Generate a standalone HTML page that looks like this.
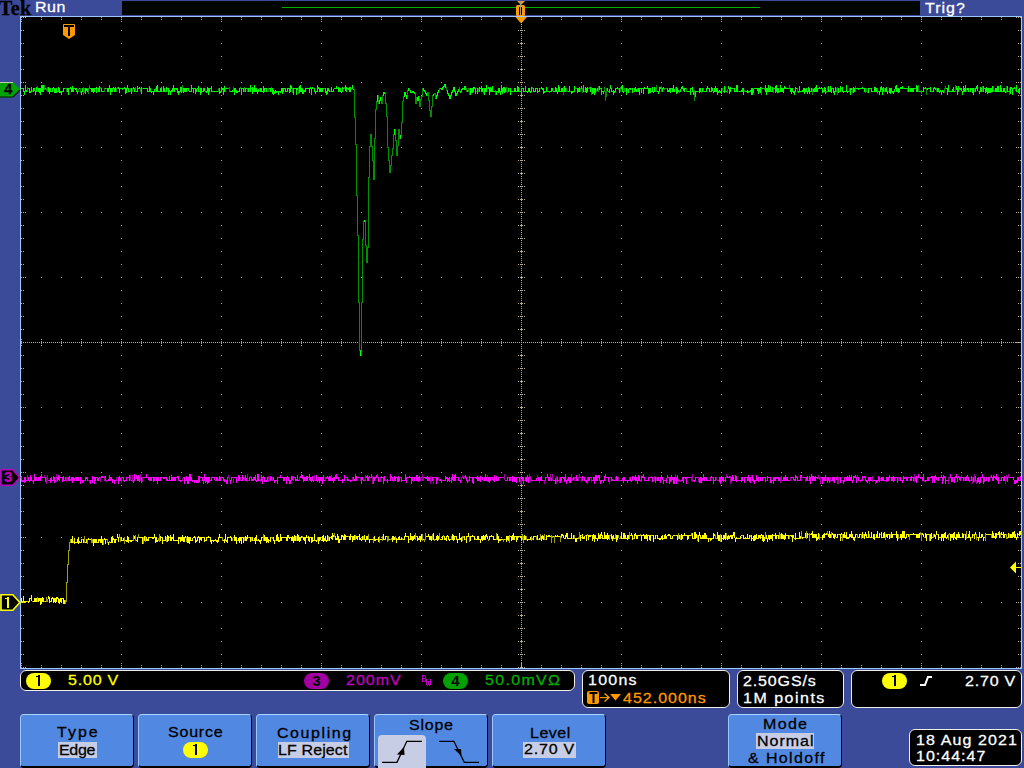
<!DOCTYPE html>
<html><head><meta charset="utf-8">
<style>
html,body{margin:0;padding:0;}
body{width:1024px;height:768px;overflow:hidden;background:#3b4a99;position:relative;font-family:"Liberation Sans",sans-serif;}
.a{position:absolute;}
.t{position:absolute;white-space:nowrap;line-height:1;}
#hdr{left:122px;top:1px;width:798px;height:14px;background:#000500;}
#grat{left:20px;top:16px;width:1000px;height:651px;border:1px solid #9cc8ff;background:#000;}
.rb{position:absolute;background:#000;border:1px solid #f0eee8;border-radius:6px;box-sizing:border-box;}
.btn{position:absolute;top:714px;width:114px;height:54px;box-sizing:border-box;background:#5188e1;border-radius:4px 4px 4px 4px;border-top:1px solid #a8d4ff;border-left:1px solid #96c8ff;border-right:1px solid #000;border-bottom:2px solid #000;}
.bl{position:absolute;left:0;width:100%;text-align:center;color:#000;font-size:16px;line-height:1;white-space:nowrap;}
.hl{background:#c8cde6;padding:1px 1px;}
.pill{position:absolute;border-radius:8px;text-align:center;color:#000;font-size:15px;font-weight:bold;line-height:16px;}
</style></head><body>
<div class="t" style="left:-1px;top:-2px;font-family:'Liberation Serif',serif;font-weight:bold;font-size:20px;color:#000;letter-spacing:0.3px;-webkit-text-stroke:0.3px #000;">Tek</div>
<div class="a" id="hdr"></div>
<div class="a" id="grat"></div>
<svg class="a" style="left:0;top:0" width="1024" height="768" shape-rendering="crispEdges">
<rect x="282" y="7" width="478" height="1" fill="#00b000"/>
<path d="M21 17h1v1h-1zM21 19h1v1h-1zM21 21h1v1h-1zM21 30h1v1h-1zM21 43h1v1h-1zM21 56h1v1h-1zM21 69h1v1h-1zM21 82h1v1h-1zM21 95h1v1h-1zM21 108h1v1h-1zM21 121h1v1h-1zM21 134h1v1h-1zM21 147h1v1h-1zM21 160h1v1h-1zM21 173h1v1h-1zM21 186h1v1h-1zM21 199h1v1h-1zM21 212h1v1h-1zM21 225h1v1h-1zM21 238h1v1h-1zM21 251h1v1h-1zM21 264h1v1h-1zM21 277h1v1h-1zM21 290h1v1h-1zM21 303h1v1h-1zM21 316h1v1h-1zM21 329h1v1h-1zM21 339h1v1h-1zM21 341h1v1h-1zM21 342h1v1h-1zM21 343h1v1h-1zM21 345h1v1h-1zM21 355h1v1h-1zM21 368h1v1h-1zM21 381h1v1h-1zM21 394h1v1h-1zM21 407h1v1h-1zM21 420h1v1h-1zM21 433h1v1h-1zM21 446h1v1h-1zM21 459h1v1h-1zM21 472h1v1h-1zM21 485h1v1h-1zM21 498h1v1h-1zM21 511h1v1h-1zM21 524h1v1h-1zM21 537h1v1h-1zM21 550h1v1h-1zM21 563h1v1h-1zM21 576h1v1h-1zM21 589h1v1h-1zM21 602h1v1h-1zM21 615h1v1h-1zM21 628h1v1h-1zM21 641h1v1h-1zM21 654h1v1h-1zM21 663h1v1h-1zM21 665h1v1h-1zM21 667h1v1h-1zM23 17h1v1h-1zM23 30h1v1h-1zM23 43h1v1h-1zM23 56h1v1h-1zM23 69h1v1h-1zM23 82h1v1h-1zM23 95h1v1h-1zM23 108h1v1h-1zM23 121h1v1h-1zM23 134h1v1h-1zM23 147h1v1h-1zM23 160h1v1h-1zM23 173h1v1h-1zM23 186h1v1h-1zM23 199h1v1h-1zM23 212h1v1h-1zM23 225h1v1h-1zM23 238h1v1h-1zM23 251h1v1h-1zM23 264h1v1h-1zM23 277h1v1h-1zM23 290h1v1h-1zM23 303h1v1h-1zM23 316h1v1h-1zM23 329h1v1h-1zM23 342h1v1h-1zM23 355h1v1h-1zM23 368h1v1h-1zM23 381h1v1h-1zM23 394h1v1h-1zM23 407h1v1h-1zM23 420h1v1h-1zM23 433h1v1h-1zM23 446h1v1h-1zM23 459h1v1h-1zM23 472h1v1h-1zM23 485h1v1h-1zM23 498h1v1h-1zM23 511h1v1h-1zM23 524h1v1h-1zM23 537h1v1h-1zM23 550h1v1h-1zM23 563h1v1h-1zM23 576h1v1h-1zM23 589h1v1h-1zM23 602h1v1h-1zM23 615h1v1h-1zM23 628h1v1h-1zM23 641h1v1h-1zM23 654h1v1h-1zM23 667h1v1h-1zM25 17h1v1h-1zM25 82h1v1h-1zM25 147h1v1h-1zM25 212h1v1h-1zM25 277h1v1h-1zM25 342h1v1h-1zM25 407h1v1h-1zM25 472h1v1h-1zM25 537h1v1h-1zM25 602h1v1h-1zM25 667h1v1h-1zM27 342h1v1h-1zM29 342h1v1h-1zM31 342h1v1h-1zM33 342h1v1h-1zM35 342h1v1h-1zM37 342h1v1h-1zM39 342h1v1h-1zM41 17h1v1h-1zM41 19h1v1h-1zM41 82h1v1h-1zM41 147h1v1h-1zM41 212h1v1h-1zM41 277h1v1h-1zM41 339h1v1h-1zM41 341h1v1h-1zM41 342h1v1h-1zM41 343h1v1h-1zM41 345h1v1h-1zM41 407h1v1h-1zM41 472h1v1h-1zM41 537h1v1h-1zM41 602h1v1h-1zM41 665h1v1h-1zM41 667h1v1h-1zM43 342h1v1h-1zM45 342h1v1h-1zM47 342h1v1h-1zM49 342h1v1h-1zM51 342h1v1h-1zM53 342h1v1h-1zM55 342h1v1h-1zM57 342h1v1h-1zM59 342h1v1h-1zM61 17h1v1h-1zM61 19h1v1h-1zM61 82h1v1h-1zM61 147h1v1h-1zM61 212h1v1h-1zM61 277h1v1h-1zM61 339h1v1h-1zM61 341h1v1h-1zM61 342h1v1h-1zM61 343h1v1h-1zM61 345h1v1h-1zM61 407h1v1h-1zM61 472h1v1h-1zM61 537h1v1h-1zM61 602h1v1h-1zM61 665h1v1h-1zM61 667h1v1h-1zM63 342h1v1h-1zM65 342h1v1h-1zM67 342h1v1h-1zM69 342h1v1h-1zM71 342h1v1h-1zM73 342h1v1h-1zM75 342h1v1h-1zM77 342h1v1h-1zM79 342h1v1h-1zM81 17h1v1h-1zM81 19h1v1h-1zM81 82h1v1h-1zM81 147h1v1h-1zM81 212h1v1h-1zM81 277h1v1h-1zM81 339h1v1h-1zM81 341h1v1h-1zM81 342h1v1h-1zM81 343h1v1h-1zM81 345h1v1h-1zM81 407h1v1h-1zM81 472h1v1h-1zM81 537h1v1h-1zM81 602h1v1h-1zM81 665h1v1h-1zM81 667h1v1h-1zM83 342h1v1h-1zM85 342h1v1h-1zM87 342h1v1h-1zM89 342h1v1h-1zM91 342h1v1h-1zM93 342h1v1h-1zM95 342h1v1h-1zM97 342h1v1h-1zM99 342h1v1h-1zM101 17h1v1h-1zM101 19h1v1h-1zM101 82h1v1h-1zM101 147h1v1h-1zM101 212h1v1h-1zM101 277h1v1h-1zM101 339h1v1h-1zM101 341h1v1h-1zM101 342h1v1h-1zM101 343h1v1h-1zM101 345h1v1h-1zM101 407h1v1h-1zM101 472h1v1h-1zM101 537h1v1h-1zM101 602h1v1h-1zM101 665h1v1h-1zM101 667h1v1h-1zM103 342h1v1h-1zM105 342h1v1h-1zM107 342h1v1h-1zM109 342h1v1h-1zM111 342h1v1h-1zM113 342h1v1h-1zM115 342h1v1h-1zM117 342h1v1h-1zM119 342h1v1h-1zM121 17h1v1h-1zM121 19h1v1h-1zM121 21h1v1h-1zM121 30h1v1h-1zM121 43h1v1h-1zM121 56h1v1h-1zM121 69h1v1h-1zM121 82h1v1h-1zM121 95h1v1h-1zM121 108h1v1h-1zM121 121h1v1h-1zM121 134h1v1h-1zM121 147h1v1h-1zM121 160h1v1h-1zM121 173h1v1h-1zM121 186h1v1h-1zM121 199h1v1h-1zM121 212h1v1h-1zM121 225h1v1h-1zM121 238h1v1h-1zM121 251h1v1h-1zM121 264h1v1h-1zM121 277h1v1h-1zM121 290h1v1h-1zM121 303h1v1h-1zM121 316h1v1h-1zM121 329h1v1h-1zM121 339h1v1h-1zM121 341h1v1h-1zM121 342h1v1h-1zM121 343h1v1h-1zM121 345h1v1h-1zM121 355h1v1h-1zM121 368h1v1h-1zM121 381h1v1h-1zM121 394h1v1h-1zM121 407h1v1h-1zM121 420h1v1h-1zM121 433h1v1h-1zM121 446h1v1h-1zM121 459h1v1h-1zM121 472h1v1h-1zM121 485h1v1h-1zM121 498h1v1h-1zM121 511h1v1h-1zM121 524h1v1h-1zM121 537h1v1h-1zM121 550h1v1h-1zM121 563h1v1h-1zM121 576h1v1h-1zM121 589h1v1h-1zM121 602h1v1h-1zM121 615h1v1h-1zM121 628h1v1h-1zM121 641h1v1h-1zM121 654h1v1h-1zM121 663h1v1h-1zM121 665h1v1h-1zM121 667h1v1h-1zM123 342h1v1h-1zM125 342h1v1h-1zM127 342h1v1h-1zM129 342h1v1h-1zM131 342h1v1h-1zM133 342h1v1h-1zM135 342h1v1h-1zM137 342h1v1h-1zM139 342h1v1h-1zM141 17h1v1h-1zM141 19h1v1h-1zM141 82h1v1h-1zM141 147h1v1h-1zM141 212h1v1h-1zM141 277h1v1h-1zM141 339h1v1h-1zM141 341h1v1h-1zM141 342h1v1h-1zM141 343h1v1h-1zM141 345h1v1h-1zM141 407h1v1h-1zM141 472h1v1h-1zM141 537h1v1h-1zM141 602h1v1h-1zM141 665h1v1h-1zM141 667h1v1h-1zM143 342h1v1h-1zM145 342h1v1h-1zM147 342h1v1h-1zM149 342h1v1h-1zM151 342h1v1h-1zM153 342h1v1h-1zM155 342h1v1h-1zM157 342h1v1h-1zM159 342h1v1h-1zM161 17h1v1h-1zM161 19h1v1h-1zM161 82h1v1h-1zM161 147h1v1h-1zM161 212h1v1h-1zM161 277h1v1h-1zM161 339h1v1h-1zM161 341h1v1h-1zM161 342h1v1h-1zM161 343h1v1h-1zM161 345h1v1h-1zM161 407h1v1h-1zM161 472h1v1h-1zM161 537h1v1h-1zM161 602h1v1h-1zM161 665h1v1h-1zM161 667h1v1h-1zM163 342h1v1h-1zM165 342h1v1h-1zM167 342h1v1h-1zM169 342h1v1h-1zM171 342h1v1h-1zM173 342h1v1h-1zM175 342h1v1h-1zM177 342h1v1h-1zM179 342h1v1h-1zM181 17h1v1h-1zM181 19h1v1h-1zM181 82h1v1h-1zM181 147h1v1h-1zM181 212h1v1h-1zM181 277h1v1h-1zM181 339h1v1h-1zM181 341h1v1h-1zM181 342h1v1h-1zM181 343h1v1h-1zM181 345h1v1h-1zM181 407h1v1h-1zM181 472h1v1h-1zM181 537h1v1h-1zM181 602h1v1h-1zM181 665h1v1h-1zM181 667h1v1h-1zM183 342h1v1h-1zM185 342h1v1h-1zM187 342h1v1h-1zM189 342h1v1h-1zM191 342h1v1h-1zM193 342h1v1h-1zM195 342h1v1h-1zM197 342h1v1h-1zM199 342h1v1h-1zM201 17h1v1h-1zM201 19h1v1h-1zM201 82h1v1h-1zM201 147h1v1h-1zM201 212h1v1h-1zM201 277h1v1h-1zM201 339h1v1h-1zM201 341h1v1h-1zM201 342h1v1h-1zM201 343h1v1h-1zM201 345h1v1h-1zM201 407h1v1h-1zM201 472h1v1h-1zM201 537h1v1h-1zM201 602h1v1h-1zM201 665h1v1h-1zM201 667h1v1h-1zM203 342h1v1h-1zM205 342h1v1h-1zM207 342h1v1h-1zM209 342h1v1h-1zM211 342h1v1h-1zM213 342h1v1h-1zM215 342h1v1h-1zM217 342h1v1h-1zM219 342h1v1h-1zM221 17h1v1h-1zM221 19h1v1h-1zM221 21h1v1h-1zM221 30h1v1h-1zM221 43h1v1h-1zM221 56h1v1h-1zM221 69h1v1h-1zM221 82h1v1h-1zM221 95h1v1h-1zM221 108h1v1h-1zM221 121h1v1h-1zM221 134h1v1h-1zM221 147h1v1h-1zM221 160h1v1h-1zM221 173h1v1h-1zM221 186h1v1h-1zM221 199h1v1h-1zM221 212h1v1h-1zM221 225h1v1h-1zM221 238h1v1h-1zM221 251h1v1h-1zM221 264h1v1h-1zM221 277h1v1h-1zM221 290h1v1h-1zM221 303h1v1h-1zM221 316h1v1h-1zM221 329h1v1h-1zM221 339h1v1h-1zM221 341h1v1h-1zM221 342h1v1h-1zM221 343h1v1h-1zM221 345h1v1h-1zM221 355h1v1h-1zM221 368h1v1h-1zM221 381h1v1h-1zM221 394h1v1h-1zM221 407h1v1h-1zM221 420h1v1h-1zM221 433h1v1h-1zM221 446h1v1h-1zM221 459h1v1h-1zM221 472h1v1h-1zM221 485h1v1h-1zM221 498h1v1h-1zM221 511h1v1h-1zM221 524h1v1h-1zM221 537h1v1h-1zM221 550h1v1h-1zM221 563h1v1h-1zM221 576h1v1h-1zM221 589h1v1h-1zM221 602h1v1h-1zM221 615h1v1h-1zM221 628h1v1h-1zM221 641h1v1h-1zM221 654h1v1h-1zM221 663h1v1h-1zM221 665h1v1h-1zM221 667h1v1h-1zM223 342h1v1h-1zM225 342h1v1h-1zM227 342h1v1h-1zM229 342h1v1h-1zM231 342h1v1h-1zM233 342h1v1h-1zM235 342h1v1h-1zM237 342h1v1h-1zM239 342h1v1h-1zM241 17h1v1h-1zM241 19h1v1h-1zM241 82h1v1h-1zM241 147h1v1h-1zM241 212h1v1h-1zM241 277h1v1h-1zM241 339h1v1h-1zM241 341h1v1h-1zM241 342h1v1h-1zM241 343h1v1h-1zM241 345h1v1h-1zM241 407h1v1h-1zM241 472h1v1h-1zM241 537h1v1h-1zM241 602h1v1h-1zM241 665h1v1h-1zM241 667h1v1h-1zM243 342h1v1h-1zM245 342h1v1h-1zM247 342h1v1h-1zM249 342h1v1h-1zM251 342h1v1h-1zM253 342h1v1h-1zM255 342h1v1h-1zM257 342h1v1h-1zM259 342h1v1h-1zM261 17h1v1h-1zM261 19h1v1h-1zM261 82h1v1h-1zM261 147h1v1h-1zM261 212h1v1h-1zM261 277h1v1h-1zM261 339h1v1h-1zM261 341h1v1h-1zM261 342h1v1h-1zM261 343h1v1h-1zM261 345h1v1h-1zM261 407h1v1h-1zM261 472h1v1h-1zM261 537h1v1h-1zM261 602h1v1h-1zM261 665h1v1h-1zM261 667h1v1h-1zM263 342h1v1h-1zM265 342h1v1h-1zM267 342h1v1h-1zM269 342h1v1h-1zM271 342h1v1h-1zM273 342h1v1h-1zM275 342h1v1h-1zM277 342h1v1h-1zM279 342h1v1h-1zM281 17h1v1h-1zM281 19h1v1h-1zM281 82h1v1h-1zM281 147h1v1h-1zM281 212h1v1h-1zM281 277h1v1h-1zM281 339h1v1h-1zM281 341h1v1h-1zM281 342h1v1h-1zM281 343h1v1h-1zM281 345h1v1h-1zM281 407h1v1h-1zM281 472h1v1h-1zM281 537h1v1h-1zM281 602h1v1h-1zM281 665h1v1h-1zM281 667h1v1h-1zM283 342h1v1h-1zM285 342h1v1h-1zM287 342h1v1h-1zM289 342h1v1h-1zM291 342h1v1h-1zM293 342h1v1h-1zM295 342h1v1h-1zM297 342h1v1h-1zM299 342h1v1h-1zM301 17h1v1h-1zM301 19h1v1h-1zM301 82h1v1h-1zM301 147h1v1h-1zM301 212h1v1h-1zM301 277h1v1h-1zM301 339h1v1h-1zM301 341h1v1h-1zM301 342h1v1h-1zM301 343h1v1h-1zM301 345h1v1h-1zM301 407h1v1h-1zM301 472h1v1h-1zM301 537h1v1h-1zM301 602h1v1h-1zM301 665h1v1h-1zM301 667h1v1h-1zM303 342h1v1h-1zM305 342h1v1h-1zM307 342h1v1h-1zM309 342h1v1h-1zM311 342h1v1h-1zM313 342h1v1h-1zM315 342h1v1h-1zM317 342h1v1h-1zM319 342h1v1h-1zM321 17h1v1h-1zM321 19h1v1h-1zM321 21h1v1h-1zM321 30h1v1h-1zM321 43h1v1h-1zM321 56h1v1h-1zM321 69h1v1h-1zM321 82h1v1h-1zM321 95h1v1h-1zM321 108h1v1h-1zM321 121h1v1h-1zM321 134h1v1h-1zM321 147h1v1h-1zM321 160h1v1h-1zM321 173h1v1h-1zM321 186h1v1h-1zM321 199h1v1h-1zM321 212h1v1h-1zM321 225h1v1h-1zM321 238h1v1h-1zM321 251h1v1h-1zM321 264h1v1h-1zM321 277h1v1h-1zM321 290h1v1h-1zM321 303h1v1h-1zM321 316h1v1h-1zM321 329h1v1h-1zM321 339h1v1h-1zM321 341h1v1h-1zM321 342h1v1h-1zM321 343h1v1h-1zM321 345h1v1h-1zM321 355h1v1h-1zM321 368h1v1h-1zM321 381h1v1h-1zM321 394h1v1h-1zM321 407h1v1h-1zM321 420h1v1h-1zM321 433h1v1h-1zM321 446h1v1h-1zM321 459h1v1h-1zM321 472h1v1h-1zM321 485h1v1h-1zM321 498h1v1h-1zM321 511h1v1h-1zM321 524h1v1h-1zM321 537h1v1h-1zM321 550h1v1h-1zM321 563h1v1h-1zM321 576h1v1h-1zM321 589h1v1h-1zM321 602h1v1h-1zM321 615h1v1h-1zM321 628h1v1h-1zM321 641h1v1h-1zM321 654h1v1h-1zM321 663h1v1h-1zM321 665h1v1h-1zM321 667h1v1h-1zM323 342h1v1h-1zM325 342h1v1h-1zM327 342h1v1h-1zM329 342h1v1h-1zM331 342h1v1h-1zM333 342h1v1h-1zM335 342h1v1h-1zM337 342h1v1h-1zM339 342h1v1h-1zM341 17h1v1h-1zM341 19h1v1h-1zM341 82h1v1h-1zM341 147h1v1h-1zM341 212h1v1h-1zM341 277h1v1h-1zM341 339h1v1h-1zM341 341h1v1h-1zM341 342h1v1h-1zM341 343h1v1h-1zM341 345h1v1h-1zM341 407h1v1h-1zM341 472h1v1h-1zM341 537h1v1h-1zM341 602h1v1h-1zM341 665h1v1h-1zM341 667h1v1h-1zM343 342h1v1h-1zM345 342h1v1h-1zM347 342h1v1h-1zM349 342h1v1h-1zM351 342h1v1h-1zM353 342h1v1h-1zM355 342h1v1h-1zM357 342h1v1h-1zM359 342h1v1h-1zM361 17h1v1h-1zM361 19h1v1h-1zM361 82h1v1h-1zM361 147h1v1h-1zM361 212h1v1h-1zM361 277h1v1h-1zM361 339h1v1h-1zM361 341h1v1h-1zM361 342h1v1h-1zM361 343h1v1h-1zM361 345h1v1h-1zM361 407h1v1h-1zM361 472h1v1h-1zM361 537h1v1h-1zM361 602h1v1h-1zM361 665h1v1h-1zM361 667h1v1h-1zM363 342h1v1h-1zM365 342h1v1h-1zM367 342h1v1h-1zM369 342h1v1h-1zM371 342h1v1h-1zM373 342h1v1h-1zM375 342h1v1h-1zM377 342h1v1h-1zM379 342h1v1h-1zM381 17h1v1h-1zM381 19h1v1h-1zM381 82h1v1h-1zM381 147h1v1h-1zM381 212h1v1h-1zM381 277h1v1h-1zM381 339h1v1h-1zM381 341h1v1h-1zM381 342h1v1h-1zM381 343h1v1h-1zM381 345h1v1h-1zM381 407h1v1h-1zM381 472h1v1h-1zM381 537h1v1h-1zM381 602h1v1h-1zM381 665h1v1h-1zM381 667h1v1h-1zM383 342h1v1h-1zM385 342h1v1h-1zM387 342h1v1h-1zM389 342h1v1h-1zM391 342h1v1h-1zM393 342h1v1h-1zM395 342h1v1h-1zM397 342h1v1h-1zM399 342h1v1h-1zM401 17h1v1h-1zM401 19h1v1h-1zM401 82h1v1h-1zM401 147h1v1h-1zM401 212h1v1h-1zM401 277h1v1h-1zM401 339h1v1h-1zM401 341h1v1h-1zM401 342h1v1h-1zM401 343h1v1h-1zM401 345h1v1h-1zM401 407h1v1h-1zM401 472h1v1h-1zM401 537h1v1h-1zM401 602h1v1h-1zM401 665h1v1h-1zM401 667h1v1h-1zM403 342h1v1h-1zM405 342h1v1h-1zM407 342h1v1h-1zM409 342h1v1h-1zM411 342h1v1h-1zM413 342h1v1h-1zM415 342h1v1h-1zM417 342h1v1h-1zM419 342h1v1h-1zM421 17h1v1h-1zM421 19h1v1h-1zM421 21h1v1h-1zM421 30h1v1h-1zM421 43h1v1h-1zM421 56h1v1h-1zM421 69h1v1h-1zM421 82h1v1h-1zM421 95h1v1h-1zM421 108h1v1h-1zM421 121h1v1h-1zM421 134h1v1h-1zM421 147h1v1h-1zM421 160h1v1h-1zM421 173h1v1h-1zM421 186h1v1h-1zM421 199h1v1h-1zM421 212h1v1h-1zM421 225h1v1h-1zM421 238h1v1h-1zM421 251h1v1h-1zM421 264h1v1h-1zM421 277h1v1h-1zM421 290h1v1h-1zM421 303h1v1h-1zM421 316h1v1h-1zM421 329h1v1h-1zM421 339h1v1h-1zM421 341h1v1h-1zM421 342h1v1h-1zM421 343h1v1h-1zM421 345h1v1h-1zM421 355h1v1h-1zM421 368h1v1h-1zM421 381h1v1h-1zM421 394h1v1h-1zM421 407h1v1h-1zM421 420h1v1h-1zM421 433h1v1h-1zM421 446h1v1h-1zM421 459h1v1h-1zM421 472h1v1h-1zM421 485h1v1h-1zM421 498h1v1h-1zM421 511h1v1h-1zM421 524h1v1h-1zM421 537h1v1h-1zM421 550h1v1h-1zM421 563h1v1h-1zM421 576h1v1h-1zM421 589h1v1h-1zM421 602h1v1h-1zM421 615h1v1h-1zM421 628h1v1h-1zM421 641h1v1h-1zM421 654h1v1h-1zM421 663h1v1h-1zM421 665h1v1h-1zM421 667h1v1h-1zM423 342h1v1h-1zM425 342h1v1h-1zM427 342h1v1h-1zM429 342h1v1h-1zM431 342h1v1h-1zM433 342h1v1h-1zM435 342h1v1h-1zM437 342h1v1h-1zM439 342h1v1h-1zM441 17h1v1h-1zM441 19h1v1h-1zM441 82h1v1h-1zM441 147h1v1h-1zM441 212h1v1h-1zM441 277h1v1h-1zM441 339h1v1h-1zM441 341h1v1h-1zM441 342h1v1h-1zM441 343h1v1h-1zM441 345h1v1h-1zM441 407h1v1h-1zM441 472h1v1h-1zM441 537h1v1h-1zM441 602h1v1h-1zM441 665h1v1h-1zM441 667h1v1h-1zM443 342h1v1h-1zM445 342h1v1h-1zM447 342h1v1h-1zM449 342h1v1h-1zM451 342h1v1h-1zM453 342h1v1h-1zM455 342h1v1h-1zM457 342h1v1h-1zM459 342h1v1h-1zM461 17h1v1h-1zM461 19h1v1h-1zM461 82h1v1h-1zM461 147h1v1h-1zM461 212h1v1h-1zM461 277h1v1h-1zM461 339h1v1h-1zM461 341h1v1h-1zM461 342h1v1h-1zM461 343h1v1h-1zM461 345h1v1h-1zM461 407h1v1h-1zM461 472h1v1h-1zM461 537h1v1h-1zM461 602h1v1h-1zM461 665h1v1h-1zM461 667h1v1h-1zM463 342h1v1h-1zM465 342h1v1h-1zM467 342h1v1h-1zM469 342h1v1h-1zM471 342h1v1h-1zM473 342h1v1h-1zM475 342h1v1h-1zM477 342h1v1h-1zM479 342h1v1h-1zM481 17h1v1h-1zM481 19h1v1h-1zM481 82h1v1h-1zM481 147h1v1h-1zM481 212h1v1h-1zM481 277h1v1h-1zM481 339h1v1h-1zM481 341h1v1h-1zM481 342h1v1h-1zM481 343h1v1h-1zM481 345h1v1h-1zM481 407h1v1h-1zM481 472h1v1h-1zM481 537h1v1h-1zM481 602h1v1h-1zM481 665h1v1h-1zM481 667h1v1h-1zM483 342h1v1h-1zM485 342h1v1h-1zM487 342h1v1h-1zM489 342h1v1h-1zM491 342h1v1h-1zM493 342h1v1h-1zM495 342h1v1h-1zM497 342h1v1h-1zM499 342h1v1h-1zM501 17h1v1h-1zM501 19h1v1h-1zM501 82h1v1h-1zM501 147h1v1h-1zM501 212h1v1h-1zM501 277h1v1h-1zM501 339h1v1h-1zM501 341h1v1h-1zM501 342h1v1h-1zM501 343h1v1h-1zM501 345h1v1h-1zM501 407h1v1h-1zM501 472h1v1h-1zM501 537h1v1h-1zM501 602h1v1h-1zM501 665h1v1h-1zM501 667h1v1h-1zM503 342h1v1h-1zM505 342h1v1h-1zM507 342h1v1h-1zM509 342h1v1h-1zM511 342h1v1h-1zM513 342h1v1h-1zM515 342h1v1h-1zM517 342h1v1h-1zM518 17h1v1h-1zM518 30h1v1h-1zM518 43h1v1h-1zM518 56h1v1h-1zM518 69h1v1h-1zM518 82h1v1h-1zM518 95h1v1h-1zM518 108h1v1h-1zM518 121h1v1h-1zM518 134h1v1h-1zM518 147h1v1h-1zM518 160h1v1h-1zM518 173h1v1h-1zM518 186h1v1h-1zM518 199h1v1h-1zM518 212h1v1h-1zM518 225h1v1h-1zM518 238h1v1h-1zM518 251h1v1h-1zM518 264h1v1h-1zM518 277h1v1h-1zM518 290h1v1h-1zM518 303h1v1h-1zM518 316h1v1h-1zM518 329h1v1h-1zM518 355h1v1h-1zM518 368h1v1h-1zM518 381h1v1h-1zM518 394h1v1h-1zM518 407h1v1h-1zM518 420h1v1h-1zM518 433h1v1h-1zM518 446h1v1h-1zM518 459h1v1h-1zM518 472h1v1h-1zM518 485h1v1h-1zM518 498h1v1h-1zM518 511h1v1h-1zM518 524h1v1h-1zM518 537h1v1h-1zM518 550h1v1h-1zM518 563h1v1h-1zM518 576h1v1h-1zM518 589h1v1h-1zM518 602h1v1h-1zM518 615h1v1h-1zM518 628h1v1h-1zM518 641h1v1h-1zM518 654h1v1h-1zM518 667h1v1h-1zM519 342h1v1h-1zM520 17h1v1h-1zM520 30h1v1h-1zM520 43h1v1h-1zM520 56h1v1h-1zM520 69h1v1h-1zM520 82h1v1h-1zM520 95h1v1h-1zM520 108h1v1h-1zM520 121h1v1h-1zM520 134h1v1h-1zM520 147h1v1h-1zM520 160h1v1h-1zM520 173h1v1h-1zM520 186h1v1h-1zM520 199h1v1h-1zM520 212h1v1h-1zM520 225h1v1h-1zM520 238h1v1h-1zM520 251h1v1h-1zM520 264h1v1h-1zM520 277h1v1h-1zM520 290h1v1h-1zM520 303h1v1h-1zM520 316h1v1h-1zM520 329h1v1h-1zM520 355h1v1h-1zM520 368h1v1h-1zM520 381h1v1h-1zM520 394h1v1h-1zM520 407h1v1h-1zM520 420h1v1h-1zM520 433h1v1h-1zM520 446h1v1h-1zM520 459h1v1h-1zM520 472h1v1h-1zM520 485h1v1h-1zM520 498h1v1h-1zM520 511h1v1h-1zM520 524h1v1h-1zM520 537h1v1h-1zM520 550h1v1h-1zM520 563h1v1h-1zM520 576h1v1h-1zM520 589h1v1h-1zM520 602h1v1h-1zM520 615h1v1h-1zM520 628h1v1h-1zM520 641h1v1h-1zM520 654h1v1h-1zM520 667h1v1h-1zM521 17h1v1h-1zM521 18h1v1h-1zM521 19h1v1h-1zM521 20h1v1h-1zM521 21h1v1h-1zM521 22h1v1h-1zM521 24h1v1h-1zM521 26h1v1h-1zM521 28h1v1h-1zM521 30h1v1h-1zM521 32h1v1h-1zM521 34h1v1h-1zM521 36h1v1h-1zM521 38h1v1h-1zM521 40h1v1h-1zM521 42h1v1h-1zM521 43h1v1h-1zM521 44h1v1h-1zM521 46h1v1h-1zM521 48h1v1h-1zM521 50h1v1h-1zM521 52h1v1h-1zM521 54h1v1h-1zM521 56h1v1h-1zM521 58h1v1h-1zM521 60h1v1h-1zM521 62h1v1h-1zM521 64h1v1h-1zM521 66h1v1h-1zM521 68h1v1h-1zM521 69h1v1h-1zM521 70h1v1h-1zM521 72h1v1h-1zM521 74h1v1h-1zM521 76h1v1h-1zM521 78h1v1h-1zM521 80h1v1h-1zM521 82h1v1h-1zM521 84h1v1h-1zM521 86h1v1h-1zM521 88h1v1h-1zM521 90h1v1h-1zM521 92h1v1h-1zM521 94h1v1h-1zM521 95h1v1h-1zM521 96h1v1h-1zM521 98h1v1h-1zM521 100h1v1h-1zM521 102h1v1h-1zM521 104h1v1h-1zM521 106h1v1h-1zM521 108h1v1h-1zM521 110h1v1h-1zM521 112h1v1h-1zM521 114h1v1h-1zM521 116h1v1h-1zM521 118h1v1h-1zM521 120h1v1h-1zM521 121h1v1h-1zM521 122h1v1h-1zM521 124h1v1h-1zM521 126h1v1h-1zM521 128h1v1h-1zM521 130h1v1h-1zM521 132h1v1h-1zM521 134h1v1h-1zM521 136h1v1h-1zM521 138h1v1h-1zM521 140h1v1h-1zM521 142h1v1h-1zM521 144h1v1h-1zM521 146h1v1h-1zM521 147h1v1h-1zM521 148h1v1h-1zM521 150h1v1h-1zM521 152h1v1h-1zM521 154h1v1h-1zM521 156h1v1h-1zM521 158h1v1h-1zM521 160h1v1h-1zM521 162h1v1h-1zM521 164h1v1h-1zM521 166h1v1h-1zM521 168h1v1h-1zM521 170h1v1h-1zM521 172h1v1h-1zM521 173h1v1h-1zM521 174h1v1h-1zM521 176h1v1h-1zM521 178h1v1h-1zM521 180h1v1h-1zM521 182h1v1h-1zM521 184h1v1h-1zM521 186h1v1h-1zM521 188h1v1h-1zM521 190h1v1h-1zM521 192h1v1h-1zM521 194h1v1h-1zM521 196h1v1h-1zM521 198h1v1h-1zM521 199h1v1h-1zM521 200h1v1h-1zM521 202h1v1h-1zM521 204h1v1h-1zM521 206h1v1h-1zM521 208h1v1h-1zM521 210h1v1h-1zM521 212h1v1h-1zM521 214h1v1h-1zM521 216h1v1h-1zM521 218h1v1h-1zM521 220h1v1h-1zM521 222h1v1h-1zM521 224h1v1h-1zM521 225h1v1h-1zM521 226h1v1h-1zM521 228h1v1h-1zM521 230h1v1h-1zM521 232h1v1h-1zM521 234h1v1h-1zM521 236h1v1h-1zM521 238h1v1h-1zM521 240h1v1h-1zM521 242h1v1h-1zM521 244h1v1h-1zM521 246h1v1h-1zM521 248h1v1h-1zM521 250h1v1h-1zM521 251h1v1h-1zM521 252h1v1h-1zM521 254h1v1h-1zM521 256h1v1h-1zM521 258h1v1h-1zM521 260h1v1h-1zM521 262h1v1h-1zM521 264h1v1h-1zM521 266h1v1h-1zM521 268h1v1h-1zM521 270h1v1h-1zM521 272h1v1h-1zM521 274h1v1h-1zM521 276h1v1h-1zM521 277h1v1h-1zM521 278h1v1h-1zM521 280h1v1h-1zM521 282h1v1h-1zM521 284h1v1h-1zM521 286h1v1h-1zM521 288h1v1h-1zM521 290h1v1h-1zM521 292h1v1h-1zM521 294h1v1h-1zM521 296h1v1h-1zM521 298h1v1h-1zM521 300h1v1h-1zM521 302h1v1h-1zM521 303h1v1h-1zM521 304h1v1h-1zM521 306h1v1h-1zM521 308h1v1h-1zM521 310h1v1h-1zM521 312h1v1h-1zM521 314h1v1h-1zM521 316h1v1h-1zM521 318h1v1h-1zM521 320h1v1h-1zM521 322h1v1h-1zM521 324h1v1h-1zM521 326h1v1h-1zM521 328h1v1h-1zM521 329h1v1h-1zM521 330h1v1h-1zM521 332h1v1h-1zM521 334h1v1h-1zM521 336h1v1h-1zM521 338h1v1h-1zM521 340h1v1h-1zM521 342h1v1h-1zM521 344h1v1h-1zM521 346h1v1h-1zM521 348h1v1h-1zM521 350h1v1h-1zM521 352h1v1h-1zM521 354h1v1h-1zM521 355h1v1h-1zM521 356h1v1h-1zM521 358h1v1h-1zM521 360h1v1h-1zM521 362h1v1h-1zM521 364h1v1h-1zM521 366h1v1h-1zM521 368h1v1h-1zM521 370h1v1h-1zM521 372h1v1h-1zM521 374h1v1h-1zM521 376h1v1h-1zM521 378h1v1h-1zM521 380h1v1h-1zM521 381h1v1h-1zM521 382h1v1h-1zM521 384h1v1h-1zM521 386h1v1h-1zM521 388h1v1h-1zM521 390h1v1h-1zM521 392h1v1h-1zM521 394h1v1h-1zM521 396h1v1h-1zM521 398h1v1h-1zM521 400h1v1h-1zM521 402h1v1h-1zM521 404h1v1h-1zM521 406h1v1h-1zM521 407h1v1h-1zM521 408h1v1h-1zM521 410h1v1h-1zM521 412h1v1h-1zM521 414h1v1h-1zM521 416h1v1h-1zM521 418h1v1h-1zM521 420h1v1h-1zM521 422h1v1h-1zM521 424h1v1h-1zM521 426h1v1h-1zM521 428h1v1h-1zM521 430h1v1h-1zM521 432h1v1h-1zM521 433h1v1h-1zM521 434h1v1h-1zM521 436h1v1h-1zM521 438h1v1h-1zM521 440h1v1h-1zM521 442h1v1h-1zM521 444h1v1h-1zM521 446h1v1h-1zM521 448h1v1h-1zM521 450h1v1h-1zM521 452h1v1h-1zM521 454h1v1h-1zM521 456h1v1h-1zM521 458h1v1h-1zM521 459h1v1h-1zM521 460h1v1h-1zM521 462h1v1h-1zM521 464h1v1h-1zM521 466h1v1h-1zM521 468h1v1h-1zM521 470h1v1h-1zM521 472h1v1h-1zM521 474h1v1h-1zM521 476h1v1h-1zM521 478h1v1h-1zM521 480h1v1h-1zM521 482h1v1h-1zM521 484h1v1h-1zM521 485h1v1h-1zM521 486h1v1h-1zM521 488h1v1h-1zM521 490h1v1h-1zM521 492h1v1h-1zM521 494h1v1h-1zM521 496h1v1h-1zM521 498h1v1h-1zM521 500h1v1h-1zM521 502h1v1h-1zM521 504h1v1h-1zM521 506h1v1h-1zM521 508h1v1h-1zM521 510h1v1h-1zM521 511h1v1h-1zM521 512h1v1h-1zM521 514h1v1h-1zM521 516h1v1h-1zM521 518h1v1h-1zM521 520h1v1h-1zM521 522h1v1h-1zM521 524h1v1h-1zM521 526h1v1h-1zM521 528h1v1h-1zM521 530h1v1h-1zM521 532h1v1h-1zM521 534h1v1h-1zM521 536h1v1h-1zM521 537h1v1h-1zM521 538h1v1h-1zM521 540h1v1h-1zM521 542h1v1h-1zM521 544h1v1h-1zM521 546h1v1h-1zM521 548h1v1h-1zM521 550h1v1h-1zM521 552h1v1h-1zM521 554h1v1h-1zM521 556h1v1h-1zM521 558h1v1h-1zM521 560h1v1h-1zM521 562h1v1h-1zM521 563h1v1h-1zM521 564h1v1h-1zM521 566h1v1h-1zM521 568h1v1h-1zM521 570h1v1h-1zM521 572h1v1h-1zM521 574h1v1h-1zM521 576h1v1h-1zM521 578h1v1h-1zM521 580h1v1h-1zM521 582h1v1h-1zM521 584h1v1h-1zM521 586h1v1h-1zM521 588h1v1h-1zM521 589h1v1h-1zM521 590h1v1h-1zM521 592h1v1h-1zM521 594h1v1h-1zM521 596h1v1h-1zM521 598h1v1h-1zM521 600h1v1h-1zM521 602h1v1h-1zM521 604h1v1h-1zM521 606h1v1h-1zM521 608h1v1h-1zM521 610h1v1h-1zM521 612h1v1h-1zM521 614h1v1h-1zM521 615h1v1h-1zM521 616h1v1h-1zM521 618h1v1h-1zM521 620h1v1h-1zM521 622h1v1h-1zM521 624h1v1h-1zM521 626h1v1h-1zM521 628h1v1h-1zM521 630h1v1h-1zM521 632h1v1h-1zM521 634h1v1h-1zM521 636h1v1h-1zM521 638h1v1h-1zM521 640h1v1h-1zM521 641h1v1h-1zM521 642h1v1h-1zM521 644h1v1h-1zM521 646h1v1h-1zM521 648h1v1h-1zM521 650h1v1h-1zM521 652h1v1h-1zM521 654h1v1h-1zM521 656h1v1h-1zM521 658h1v1h-1zM521 660h1v1h-1zM521 662h1v1h-1zM521 663h1v1h-1zM521 664h1v1h-1zM521 665h1v1h-1zM521 666h1v1h-1zM521 667h1v1h-1zM522 17h1v1h-1zM522 30h1v1h-1zM522 43h1v1h-1zM522 56h1v1h-1zM522 69h1v1h-1zM522 82h1v1h-1zM522 95h1v1h-1zM522 108h1v1h-1zM522 121h1v1h-1zM522 134h1v1h-1zM522 147h1v1h-1zM522 160h1v1h-1zM522 173h1v1h-1zM522 186h1v1h-1zM522 199h1v1h-1zM522 212h1v1h-1zM522 225h1v1h-1zM522 238h1v1h-1zM522 251h1v1h-1zM522 264h1v1h-1zM522 277h1v1h-1zM522 290h1v1h-1zM522 303h1v1h-1zM522 316h1v1h-1zM522 329h1v1h-1zM522 355h1v1h-1zM522 368h1v1h-1zM522 381h1v1h-1zM522 394h1v1h-1zM522 407h1v1h-1zM522 420h1v1h-1zM522 433h1v1h-1zM522 446h1v1h-1zM522 459h1v1h-1zM522 472h1v1h-1zM522 485h1v1h-1zM522 498h1v1h-1zM522 511h1v1h-1zM522 524h1v1h-1zM522 537h1v1h-1zM522 550h1v1h-1zM522 563h1v1h-1zM522 576h1v1h-1zM522 589h1v1h-1zM522 602h1v1h-1zM522 615h1v1h-1zM522 628h1v1h-1zM522 641h1v1h-1zM522 654h1v1h-1zM522 667h1v1h-1zM523 342h1v1h-1zM524 17h1v1h-1zM524 30h1v1h-1zM524 43h1v1h-1zM524 56h1v1h-1zM524 69h1v1h-1zM524 82h1v1h-1zM524 95h1v1h-1zM524 108h1v1h-1zM524 121h1v1h-1zM524 134h1v1h-1zM524 147h1v1h-1zM524 160h1v1h-1zM524 173h1v1h-1zM524 186h1v1h-1zM524 199h1v1h-1zM524 212h1v1h-1zM524 225h1v1h-1zM524 238h1v1h-1zM524 251h1v1h-1zM524 264h1v1h-1zM524 277h1v1h-1zM524 290h1v1h-1zM524 303h1v1h-1zM524 316h1v1h-1zM524 329h1v1h-1zM524 355h1v1h-1zM524 368h1v1h-1zM524 381h1v1h-1zM524 394h1v1h-1zM524 407h1v1h-1zM524 420h1v1h-1zM524 433h1v1h-1zM524 446h1v1h-1zM524 459h1v1h-1zM524 472h1v1h-1zM524 485h1v1h-1zM524 498h1v1h-1zM524 511h1v1h-1zM524 524h1v1h-1zM524 537h1v1h-1zM524 550h1v1h-1zM524 563h1v1h-1zM524 576h1v1h-1zM524 589h1v1h-1zM524 602h1v1h-1zM524 615h1v1h-1zM524 628h1v1h-1zM524 641h1v1h-1zM524 654h1v1h-1zM524 667h1v1h-1zM525 342h1v1h-1zM527 342h1v1h-1zM529 342h1v1h-1zM531 342h1v1h-1zM533 342h1v1h-1zM535 342h1v1h-1zM537 342h1v1h-1zM539 342h1v1h-1zM541 17h1v1h-1zM541 19h1v1h-1zM541 82h1v1h-1zM541 147h1v1h-1zM541 212h1v1h-1zM541 277h1v1h-1zM541 339h1v1h-1zM541 341h1v1h-1zM541 342h1v1h-1zM541 343h1v1h-1zM541 345h1v1h-1zM541 407h1v1h-1zM541 472h1v1h-1zM541 537h1v1h-1zM541 602h1v1h-1zM541 665h1v1h-1zM541 667h1v1h-1zM543 342h1v1h-1zM545 342h1v1h-1zM547 342h1v1h-1zM549 342h1v1h-1zM551 342h1v1h-1zM553 342h1v1h-1zM555 342h1v1h-1zM557 342h1v1h-1zM559 342h1v1h-1zM561 17h1v1h-1zM561 19h1v1h-1zM561 82h1v1h-1zM561 147h1v1h-1zM561 212h1v1h-1zM561 277h1v1h-1zM561 339h1v1h-1zM561 341h1v1h-1zM561 342h1v1h-1zM561 343h1v1h-1zM561 345h1v1h-1zM561 407h1v1h-1zM561 472h1v1h-1zM561 537h1v1h-1zM561 602h1v1h-1zM561 665h1v1h-1zM561 667h1v1h-1zM563 342h1v1h-1zM565 342h1v1h-1zM567 342h1v1h-1zM569 342h1v1h-1zM571 342h1v1h-1zM573 342h1v1h-1zM575 342h1v1h-1zM577 342h1v1h-1zM579 342h1v1h-1zM581 17h1v1h-1zM581 19h1v1h-1zM581 82h1v1h-1zM581 147h1v1h-1zM581 212h1v1h-1zM581 277h1v1h-1zM581 339h1v1h-1zM581 341h1v1h-1zM581 342h1v1h-1zM581 343h1v1h-1zM581 345h1v1h-1zM581 407h1v1h-1zM581 472h1v1h-1zM581 537h1v1h-1zM581 602h1v1h-1zM581 665h1v1h-1zM581 667h1v1h-1zM583 342h1v1h-1zM585 342h1v1h-1zM587 342h1v1h-1zM589 342h1v1h-1zM591 342h1v1h-1zM593 342h1v1h-1zM595 342h1v1h-1zM597 342h1v1h-1zM599 342h1v1h-1zM601 17h1v1h-1zM601 19h1v1h-1zM601 82h1v1h-1zM601 147h1v1h-1zM601 212h1v1h-1zM601 277h1v1h-1zM601 339h1v1h-1zM601 341h1v1h-1zM601 342h1v1h-1zM601 343h1v1h-1zM601 345h1v1h-1zM601 407h1v1h-1zM601 472h1v1h-1zM601 537h1v1h-1zM601 602h1v1h-1zM601 665h1v1h-1zM601 667h1v1h-1zM603 342h1v1h-1zM605 342h1v1h-1zM607 342h1v1h-1zM609 342h1v1h-1zM611 342h1v1h-1zM613 342h1v1h-1zM615 342h1v1h-1zM617 342h1v1h-1zM619 342h1v1h-1zM621 17h1v1h-1zM621 19h1v1h-1zM621 21h1v1h-1zM621 30h1v1h-1zM621 43h1v1h-1zM621 56h1v1h-1zM621 69h1v1h-1zM621 82h1v1h-1zM621 95h1v1h-1zM621 108h1v1h-1zM621 121h1v1h-1zM621 134h1v1h-1zM621 147h1v1h-1zM621 160h1v1h-1zM621 173h1v1h-1zM621 186h1v1h-1zM621 199h1v1h-1zM621 212h1v1h-1zM621 225h1v1h-1zM621 238h1v1h-1zM621 251h1v1h-1zM621 264h1v1h-1zM621 277h1v1h-1zM621 290h1v1h-1zM621 303h1v1h-1zM621 316h1v1h-1zM621 329h1v1h-1zM621 339h1v1h-1zM621 341h1v1h-1zM621 342h1v1h-1zM621 343h1v1h-1zM621 345h1v1h-1zM621 355h1v1h-1zM621 368h1v1h-1zM621 381h1v1h-1zM621 394h1v1h-1zM621 407h1v1h-1zM621 420h1v1h-1zM621 433h1v1h-1zM621 446h1v1h-1zM621 459h1v1h-1zM621 472h1v1h-1zM621 485h1v1h-1zM621 498h1v1h-1zM621 511h1v1h-1zM621 524h1v1h-1zM621 537h1v1h-1zM621 550h1v1h-1zM621 563h1v1h-1zM621 576h1v1h-1zM621 589h1v1h-1zM621 602h1v1h-1zM621 615h1v1h-1zM621 628h1v1h-1zM621 641h1v1h-1zM621 654h1v1h-1zM621 663h1v1h-1zM621 665h1v1h-1zM621 667h1v1h-1zM623 342h1v1h-1zM625 342h1v1h-1zM627 342h1v1h-1zM629 342h1v1h-1zM631 342h1v1h-1zM633 342h1v1h-1zM635 342h1v1h-1zM637 342h1v1h-1zM639 342h1v1h-1zM641 17h1v1h-1zM641 19h1v1h-1zM641 82h1v1h-1zM641 147h1v1h-1zM641 212h1v1h-1zM641 277h1v1h-1zM641 339h1v1h-1zM641 341h1v1h-1zM641 342h1v1h-1zM641 343h1v1h-1zM641 345h1v1h-1zM641 407h1v1h-1zM641 472h1v1h-1zM641 537h1v1h-1zM641 602h1v1h-1zM641 665h1v1h-1zM641 667h1v1h-1zM643 342h1v1h-1zM645 342h1v1h-1zM647 342h1v1h-1zM649 342h1v1h-1zM651 342h1v1h-1zM653 342h1v1h-1zM655 342h1v1h-1zM657 342h1v1h-1zM659 342h1v1h-1zM661 17h1v1h-1zM661 19h1v1h-1zM661 82h1v1h-1zM661 147h1v1h-1zM661 212h1v1h-1zM661 277h1v1h-1zM661 339h1v1h-1zM661 341h1v1h-1zM661 342h1v1h-1zM661 343h1v1h-1zM661 345h1v1h-1zM661 407h1v1h-1zM661 472h1v1h-1zM661 537h1v1h-1zM661 602h1v1h-1zM661 665h1v1h-1zM661 667h1v1h-1zM663 342h1v1h-1zM665 342h1v1h-1zM667 342h1v1h-1zM669 342h1v1h-1zM671 342h1v1h-1zM673 342h1v1h-1zM675 342h1v1h-1zM677 342h1v1h-1zM679 342h1v1h-1zM681 17h1v1h-1zM681 19h1v1h-1zM681 82h1v1h-1zM681 147h1v1h-1zM681 212h1v1h-1zM681 277h1v1h-1zM681 339h1v1h-1zM681 341h1v1h-1zM681 342h1v1h-1zM681 343h1v1h-1zM681 345h1v1h-1zM681 407h1v1h-1zM681 472h1v1h-1zM681 537h1v1h-1zM681 602h1v1h-1zM681 665h1v1h-1zM681 667h1v1h-1zM683 342h1v1h-1zM685 342h1v1h-1zM687 342h1v1h-1zM689 342h1v1h-1zM691 342h1v1h-1zM693 342h1v1h-1zM695 342h1v1h-1zM697 342h1v1h-1zM699 342h1v1h-1zM701 17h1v1h-1zM701 19h1v1h-1zM701 82h1v1h-1zM701 147h1v1h-1zM701 212h1v1h-1zM701 277h1v1h-1zM701 339h1v1h-1zM701 341h1v1h-1zM701 342h1v1h-1zM701 343h1v1h-1zM701 345h1v1h-1zM701 407h1v1h-1zM701 472h1v1h-1zM701 537h1v1h-1zM701 602h1v1h-1zM701 665h1v1h-1zM701 667h1v1h-1zM703 342h1v1h-1zM705 342h1v1h-1zM707 342h1v1h-1zM709 342h1v1h-1zM711 342h1v1h-1zM713 342h1v1h-1zM715 342h1v1h-1zM717 342h1v1h-1zM719 342h1v1h-1zM721 17h1v1h-1zM721 19h1v1h-1zM721 21h1v1h-1zM721 30h1v1h-1zM721 43h1v1h-1zM721 56h1v1h-1zM721 69h1v1h-1zM721 82h1v1h-1zM721 95h1v1h-1zM721 108h1v1h-1zM721 121h1v1h-1zM721 134h1v1h-1zM721 147h1v1h-1zM721 160h1v1h-1zM721 173h1v1h-1zM721 186h1v1h-1zM721 199h1v1h-1zM721 212h1v1h-1zM721 225h1v1h-1zM721 238h1v1h-1zM721 251h1v1h-1zM721 264h1v1h-1zM721 277h1v1h-1zM721 290h1v1h-1zM721 303h1v1h-1zM721 316h1v1h-1zM721 329h1v1h-1zM721 339h1v1h-1zM721 341h1v1h-1zM721 342h1v1h-1zM721 343h1v1h-1zM721 345h1v1h-1zM721 355h1v1h-1zM721 368h1v1h-1zM721 381h1v1h-1zM721 394h1v1h-1zM721 407h1v1h-1zM721 420h1v1h-1zM721 433h1v1h-1zM721 446h1v1h-1zM721 459h1v1h-1zM721 472h1v1h-1zM721 485h1v1h-1zM721 498h1v1h-1zM721 511h1v1h-1zM721 524h1v1h-1zM721 537h1v1h-1zM721 550h1v1h-1zM721 563h1v1h-1zM721 576h1v1h-1zM721 589h1v1h-1zM721 602h1v1h-1zM721 615h1v1h-1zM721 628h1v1h-1zM721 641h1v1h-1zM721 654h1v1h-1zM721 663h1v1h-1zM721 665h1v1h-1zM721 667h1v1h-1zM723 342h1v1h-1zM725 342h1v1h-1zM727 342h1v1h-1zM729 342h1v1h-1zM731 342h1v1h-1zM733 342h1v1h-1zM735 342h1v1h-1zM737 342h1v1h-1zM739 342h1v1h-1zM741 17h1v1h-1zM741 19h1v1h-1zM741 82h1v1h-1zM741 147h1v1h-1zM741 212h1v1h-1zM741 277h1v1h-1zM741 339h1v1h-1zM741 341h1v1h-1zM741 342h1v1h-1zM741 343h1v1h-1zM741 345h1v1h-1zM741 407h1v1h-1zM741 472h1v1h-1zM741 537h1v1h-1zM741 602h1v1h-1zM741 665h1v1h-1zM741 667h1v1h-1zM743 342h1v1h-1zM745 342h1v1h-1zM747 342h1v1h-1zM749 342h1v1h-1zM751 342h1v1h-1zM753 342h1v1h-1zM755 342h1v1h-1zM757 342h1v1h-1zM759 342h1v1h-1zM761 17h1v1h-1zM761 19h1v1h-1zM761 82h1v1h-1zM761 147h1v1h-1zM761 212h1v1h-1zM761 277h1v1h-1zM761 339h1v1h-1zM761 341h1v1h-1zM761 342h1v1h-1zM761 343h1v1h-1zM761 345h1v1h-1zM761 407h1v1h-1zM761 472h1v1h-1zM761 537h1v1h-1zM761 602h1v1h-1zM761 665h1v1h-1zM761 667h1v1h-1zM763 342h1v1h-1zM765 342h1v1h-1zM767 342h1v1h-1zM769 342h1v1h-1zM771 342h1v1h-1zM773 342h1v1h-1zM775 342h1v1h-1zM777 342h1v1h-1zM779 342h1v1h-1zM781 17h1v1h-1zM781 19h1v1h-1zM781 82h1v1h-1zM781 147h1v1h-1zM781 212h1v1h-1zM781 277h1v1h-1zM781 339h1v1h-1zM781 341h1v1h-1zM781 342h1v1h-1zM781 343h1v1h-1zM781 345h1v1h-1zM781 407h1v1h-1zM781 472h1v1h-1zM781 537h1v1h-1zM781 602h1v1h-1zM781 665h1v1h-1zM781 667h1v1h-1zM783 342h1v1h-1zM785 342h1v1h-1zM787 342h1v1h-1zM789 342h1v1h-1zM791 342h1v1h-1zM793 342h1v1h-1zM795 342h1v1h-1zM797 342h1v1h-1zM799 342h1v1h-1zM801 17h1v1h-1zM801 19h1v1h-1zM801 82h1v1h-1zM801 147h1v1h-1zM801 212h1v1h-1zM801 277h1v1h-1zM801 339h1v1h-1zM801 341h1v1h-1zM801 342h1v1h-1zM801 343h1v1h-1zM801 345h1v1h-1zM801 407h1v1h-1zM801 472h1v1h-1zM801 537h1v1h-1zM801 602h1v1h-1zM801 665h1v1h-1zM801 667h1v1h-1zM803 342h1v1h-1zM805 342h1v1h-1zM807 342h1v1h-1zM809 342h1v1h-1zM811 342h1v1h-1zM813 342h1v1h-1zM815 342h1v1h-1zM817 342h1v1h-1zM819 342h1v1h-1zM821 17h1v1h-1zM821 19h1v1h-1zM821 21h1v1h-1zM821 30h1v1h-1zM821 43h1v1h-1zM821 56h1v1h-1zM821 69h1v1h-1zM821 82h1v1h-1zM821 95h1v1h-1zM821 108h1v1h-1zM821 121h1v1h-1zM821 134h1v1h-1zM821 147h1v1h-1zM821 160h1v1h-1zM821 173h1v1h-1zM821 186h1v1h-1zM821 199h1v1h-1zM821 212h1v1h-1zM821 225h1v1h-1zM821 238h1v1h-1zM821 251h1v1h-1zM821 264h1v1h-1zM821 277h1v1h-1zM821 290h1v1h-1zM821 303h1v1h-1zM821 316h1v1h-1zM821 329h1v1h-1zM821 339h1v1h-1zM821 341h1v1h-1zM821 342h1v1h-1zM821 343h1v1h-1zM821 345h1v1h-1zM821 355h1v1h-1zM821 368h1v1h-1zM821 381h1v1h-1zM821 394h1v1h-1zM821 407h1v1h-1zM821 420h1v1h-1zM821 433h1v1h-1zM821 446h1v1h-1zM821 459h1v1h-1zM821 472h1v1h-1zM821 485h1v1h-1zM821 498h1v1h-1zM821 511h1v1h-1zM821 524h1v1h-1zM821 537h1v1h-1zM821 550h1v1h-1zM821 563h1v1h-1zM821 576h1v1h-1zM821 589h1v1h-1zM821 602h1v1h-1zM821 615h1v1h-1zM821 628h1v1h-1zM821 641h1v1h-1zM821 654h1v1h-1zM821 663h1v1h-1zM821 665h1v1h-1zM821 667h1v1h-1zM823 342h1v1h-1zM825 342h1v1h-1zM827 342h1v1h-1zM829 342h1v1h-1zM831 342h1v1h-1zM833 342h1v1h-1zM835 342h1v1h-1zM837 342h1v1h-1zM839 342h1v1h-1zM841 17h1v1h-1zM841 19h1v1h-1zM841 82h1v1h-1zM841 147h1v1h-1zM841 212h1v1h-1zM841 277h1v1h-1zM841 339h1v1h-1zM841 341h1v1h-1zM841 342h1v1h-1zM841 343h1v1h-1zM841 345h1v1h-1zM841 407h1v1h-1zM841 472h1v1h-1zM841 537h1v1h-1zM841 602h1v1h-1zM841 665h1v1h-1zM841 667h1v1h-1zM843 342h1v1h-1zM845 342h1v1h-1zM847 342h1v1h-1zM849 342h1v1h-1zM851 342h1v1h-1zM853 342h1v1h-1zM855 342h1v1h-1zM857 342h1v1h-1zM859 342h1v1h-1zM861 17h1v1h-1zM861 19h1v1h-1zM861 82h1v1h-1zM861 147h1v1h-1zM861 212h1v1h-1zM861 277h1v1h-1zM861 339h1v1h-1zM861 341h1v1h-1zM861 342h1v1h-1zM861 343h1v1h-1zM861 345h1v1h-1zM861 407h1v1h-1zM861 472h1v1h-1zM861 537h1v1h-1zM861 602h1v1h-1zM861 665h1v1h-1zM861 667h1v1h-1zM863 342h1v1h-1zM865 342h1v1h-1zM867 342h1v1h-1zM869 342h1v1h-1zM871 342h1v1h-1zM873 342h1v1h-1zM875 342h1v1h-1zM877 342h1v1h-1zM879 342h1v1h-1zM881 17h1v1h-1zM881 19h1v1h-1zM881 82h1v1h-1zM881 147h1v1h-1zM881 212h1v1h-1zM881 277h1v1h-1zM881 339h1v1h-1zM881 341h1v1h-1zM881 342h1v1h-1zM881 343h1v1h-1zM881 345h1v1h-1zM881 407h1v1h-1zM881 472h1v1h-1zM881 537h1v1h-1zM881 602h1v1h-1zM881 665h1v1h-1zM881 667h1v1h-1zM883 342h1v1h-1zM885 342h1v1h-1zM887 342h1v1h-1zM889 342h1v1h-1zM891 342h1v1h-1zM893 342h1v1h-1zM895 342h1v1h-1zM897 342h1v1h-1zM899 342h1v1h-1zM901 17h1v1h-1zM901 19h1v1h-1zM901 82h1v1h-1zM901 147h1v1h-1zM901 212h1v1h-1zM901 277h1v1h-1zM901 339h1v1h-1zM901 341h1v1h-1zM901 342h1v1h-1zM901 343h1v1h-1zM901 345h1v1h-1zM901 407h1v1h-1zM901 472h1v1h-1zM901 537h1v1h-1zM901 602h1v1h-1zM901 665h1v1h-1zM901 667h1v1h-1zM903 342h1v1h-1zM905 342h1v1h-1zM907 342h1v1h-1zM909 342h1v1h-1zM911 342h1v1h-1zM913 342h1v1h-1zM915 342h1v1h-1zM917 342h1v1h-1zM919 342h1v1h-1zM921 17h1v1h-1zM921 19h1v1h-1zM921 21h1v1h-1zM921 30h1v1h-1zM921 43h1v1h-1zM921 56h1v1h-1zM921 69h1v1h-1zM921 82h1v1h-1zM921 95h1v1h-1zM921 108h1v1h-1zM921 121h1v1h-1zM921 134h1v1h-1zM921 147h1v1h-1zM921 160h1v1h-1zM921 173h1v1h-1zM921 186h1v1h-1zM921 199h1v1h-1zM921 212h1v1h-1zM921 225h1v1h-1zM921 238h1v1h-1zM921 251h1v1h-1zM921 264h1v1h-1zM921 277h1v1h-1zM921 290h1v1h-1zM921 303h1v1h-1zM921 316h1v1h-1zM921 329h1v1h-1zM921 339h1v1h-1zM921 341h1v1h-1zM921 342h1v1h-1zM921 343h1v1h-1zM921 345h1v1h-1zM921 355h1v1h-1zM921 368h1v1h-1zM921 381h1v1h-1zM921 394h1v1h-1zM921 407h1v1h-1zM921 420h1v1h-1zM921 433h1v1h-1zM921 446h1v1h-1zM921 459h1v1h-1zM921 472h1v1h-1zM921 485h1v1h-1zM921 498h1v1h-1zM921 511h1v1h-1zM921 524h1v1h-1zM921 537h1v1h-1zM921 550h1v1h-1zM921 563h1v1h-1zM921 576h1v1h-1zM921 589h1v1h-1zM921 602h1v1h-1zM921 615h1v1h-1zM921 628h1v1h-1zM921 641h1v1h-1zM921 654h1v1h-1zM921 663h1v1h-1zM921 665h1v1h-1zM921 667h1v1h-1zM923 342h1v1h-1zM925 342h1v1h-1zM927 342h1v1h-1zM929 342h1v1h-1zM931 342h1v1h-1zM933 342h1v1h-1zM935 342h1v1h-1zM937 342h1v1h-1zM939 342h1v1h-1zM941 17h1v1h-1zM941 19h1v1h-1zM941 82h1v1h-1zM941 147h1v1h-1zM941 212h1v1h-1zM941 277h1v1h-1zM941 339h1v1h-1zM941 341h1v1h-1zM941 342h1v1h-1zM941 343h1v1h-1zM941 345h1v1h-1zM941 407h1v1h-1zM941 472h1v1h-1zM941 537h1v1h-1zM941 602h1v1h-1zM941 665h1v1h-1zM941 667h1v1h-1zM943 342h1v1h-1zM945 342h1v1h-1zM947 342h1v1h-1zM949 342h1v1h-1zM951 342h1v1h-1zM953 342h1v1h-1zM955 342h1v1h-1zM957 342h1v1h-1zM959 342h1v1h-1zM961 17h1v1h-1zM961 19h1v1h-1zM961 82h1v1h-1zM961 147h1v1h-1zM961 212h1v1h-1zM961 277h1v1h-1zM961 339h1v1h-1zM961 341h1v1h-1zM961 342h1v1h-1zM961 343h1v1h-1zM961 345h1v1h-1zM961 407h1v1h-1zM961 472h1v1h-1zM961 537h1v1h-1zM961 602h1v1h-1zM961 665h1v1h-1zM961 667h1v1h-1zM963 342h1v1h-1zM965 342h1v1h-1zM967 342h1v1h-1zM969 342h1v1h-1zM971 342h1v1h-1zM973 342h1v1h-1zM975 342h1v1h-1zM977 342h1v1h-1zM979 342h1v1h-1zM981 17h1v1h-1zM981 19h1v1h-1zM981 82h1v1h-1zM981 147h1v1h-1zM981 212h1v1h-1zM981 277h1v1h-1zM981 339h1v1h-1zM981 341h1v1h-1zM981 342h1v1h-1zM981 343h1v1h-1zM981 345h1v1h-1zM981 407h1v1h-1zM981 472h1v1h-1zM981 537h1v1h-1zM981 602h1v1h-1zM981 665h1v1h-1zM981 667h1v1h-1zM983 342h1v1h-1zM985 342h1v1h-1zM987 342h1v1h-1zM989 342h1v1h-1zM991 342h1v1h-1zM993 342h1v1h-1zM995 342h1v1h-1zM997 342h1v1h-1zM999 342h1v1h-1zM1001 17h1v1h-1zM1001 19h1v1h-1zM1001 82h1v1h-1zM1001 147h1v1h-1zM1001 212h1v1h-1zM1001 277h1v1h-1zM1001 339h1v1h-1zM1001 341h1v1h-1zM1001 342h1v1h-1zM1001 343h1v1h-1zM1001 345h1v1h-1zM1001 407h1v1h-1zM1001 472h1v1h-1zM1001 537h1v1h-1zM1001 602h1v1h-1zM1001 665h1v1h-1zM1001 667h1v1h-1zM1003 342h1v1h-1zM1005 342h1v1h-1zM1007 342h1v1h-1zM1009 342h1v1h-1zM1011 342h1v1h-1zM1013 342h1v1h-1zM1015 342h1v1h-1zM1016 17h1v1h-1zM1016 82h1v1h-1zM1016 147h1v1h-1zM1016 212h1v1h-1zM1016 277h1v1h-1zM1016 342h1v1h-1zM1016 407h1v1h-1zM1016 472h1v1h-1zM1016 537h1v1h-1zM1016 602h1v1h-1zM1016 667h1v1h-1zM1017 342h1v1h-1zM1018 17h1v1h-1zM1018 30h1v1h-1zM1018 43h1v1h-1zM1018 56h1v1h-1zM1018 69h1v1h-1zM1018 82h1v1h-1zM1018 95h1v1h-1zM1018 108h1v1h-1zM1018 121h1v1h-1zM1018 134h1v1h-1zM1018 147h1v1h-1zM1018 160h1v1h-1zM1018 173h1v1h-1zM1018 186h1v1h-1zM1018 199h1v1h-1zM1018 212h1v1h-1zM1018 225h1v1h-1zM1018 238h1v1h-1zM1018 251h1v1h-1zM1018 264h1v1h-1zM1018 277h1v1h-1zM1018 290h1v1h-1zM1018 303h1v1h-1zM1018 316h1v1h-1zM1018 329h1v1h-1zM1018 342h1v1h-1zM1018 355h1v1h-1zM1018 368h1v1h-1zM1018 381h1v1h-1zM1018 394h1v1h-1zM1018 407h1v1h-1zM1018 420h1v1h-1zM1018 433h1v1h-1zM1018 446h1v1h-1zM1018 459h1v1h-1zM1018 472h1v1h-1zM1018 485h1v1h-1zM1018 498h1v1h-1zM1018 511h1v1h-1zM1018 524h1v1h-1zM1018 537h1v1h-1zM1018 550h1v1h-1zM1018 563h1v1h-1zM1018 576h1v1h-1zM1018 589h1v1h-1zM1018 602h1v1h-1zM1018 615h1v1h-1zM1018 628h1v1h-1zM1018 641h1v1h-1zM1018 654h1v1h-1zM1018 667h1v1h-1zM1019 342h1v1h-1zM1020 17h1v1h-1zM1020 30h1v1h-1zM1020 43h1v1h-1zM1020 56h1v1h-1zM1020 69h1v1h-1zM1020 82h1v1h-1zM1020 95h1v1h-1zM1020 108h1v1h-1zM1020 121h1v1h-1zM1020 134h1v1h-1zM1020 147h1v1h-1zM1020 160h1v1h-1zM1020 173h1v1h-1zM1020 186h1v1h-1zM1020 199h1v1h-1zM1020 212h1v1h-1zM1020 225h1v1h-1zM1020 238h1v1h-1zM1020 251h1v1h-1zM1020 264h1v1h-1zM1020 277h1v1h-1zM1020 290h1v1h-1zM1020 303h1v1h-1zM1020 316h1v1h-1zM1020 329h1v1h-1zM1020 342h1v1h-1zM1020 355h1v1h-1zM1020 368h1v1h-1zM1020 381h1v1h-1zM1020 394h1v1h-1zM1020 407h1v1h-1zM1020 420h1v1h-1zM1020 433h1v1h-1zM1020 446h1v1h-1zM1020 459h1v1h-1zM1020 472h1v1h-1zM1020 485h1v1h-1zM1020 498h1v1h-1zM1020 511h1v1h-1zM1020 524h1v1h-1zM1020 537h1v1h-1zM1020 550h1v1h-1zM1020 563h1v1h-1zM1020 576h1v1h-1zM1020 589h1v1h-1zM1020 602h1v1h-1zM1020 615h1v1h-1zM1020 628h1v1h-1zM1020 641h1v1h-1zM1020 654h1v1h-1zM1020 667h1v1h-1z" fill="#b4aa8c"/>
<path d="M27 87h1v5h-1zM32 90h1v2h-1zM37 86h1v6h-1zM44 85h1v5h-1zM46 88h1v3h-1zM47 87h1v5h-1zM65 88h1v1h-1zM66 88h1v4h-1zM69 88h1v1h-1zM78 89h1v3h-1zM80 88h1v5h-1zM83 87h1v8h-1zM84 88h1v5h-1zM88 88h1v6h-1zM89 85h1v4h-1zM100 87h1v2h-1zM104 88h1v4h-1zM106 88h1v1h-1zM116 88h1v4h-1zM117 87h1v2h-1zM121 88h1v1h-1zM130 88h1v4h-1zM132 88h1v4h-1zM135 87h1v5h-1zM140 88h1v4h-1zM142 88h1v1h-1zM155 88h1v4h-1zM162 91h1v1h-1zM182 85h1v7h-1zM218 88h1v4h-1zM225 88h1v4h-1zM228 88h1v1h-1zM229 87h1v5h-1zM233 87h1v5h-1zM240 87h1v2h-1zM244 87h1v5h-1zM247 88h1v4h-1zM249 88h1v4h-1zM259 88h1v3h-1zM267 91h1v1h-1zM268 88h1v4h-1zM271 87h1v5h-1zM292 88h1v5h-1zM298 87h1v7h-1zM313 88h1v1h-1zM324 88h1v1h-1zM330 91h1v1h-1zM344 87h1v2h-1zM351 88h1v1h-1zM354 89h1v29h-1zM355 117h1v28h-1zM356 144h1v52h-1zM357 195h1v41h-1zM358 235h1v68h-1zM359 302h1v49h-1zM361 302h1v54h-1zM362 239h1v64h-1zM363 221h1v19h-1zM365 220h1v26h-1zM366 245h1v18h-1zM367 247h1v16h-1zM368 177h1v71h-1zM369 146h1v32h-1zM370 134h1v13h-1zM371 134h1v13h-1zM372 146h1v15h-1zM373 160h1v20h-1zM374 138h1v42h-1zM375 109h1v30h-1zM376 101h1v9h-1zM378 95h1v9h-1zM381 97h1v7h-1zM382 95h1v9h-1zM385 93h1v11h-1zM386 103h1v14h-1zM387 116h1v32h-1zM388 147h1v14h-1zM389 160h1v13h-1zM390 165h1v8h-1zM391 155h1v11h-1zM392 148h1v8h-1zM393 134h1v15h-1zM395 129h1v12h-1zM396 140h1v16h-1zM397 145h1v11h-1zM398 129h1v17h-1zM399 129h1v10h-1zM401 122h1v14h-1zM402 101h1v22h-1zM403 96h1v6h-1zM407 90h1v9h-1zM409 88h1v3h-1zM415 93h1v11h-1zM416 97h1v7h-1zM419 96h1v11h-1zM420 99h1v8h-1zM421 96h1v4h-1zM422 88h1v9h-1zM427 92h1v4h-1zM428 92h1v9h-1zM429 100h1v11h-1zM430 110h1v7h-1zM431 106h1v11h-1zM432 95h1v12h-1zM434 93h1v2h-1zM435 93h1v6h-1zM439 88h1v3h-1zM446 87h1v4h-1zM459 87h1v5h-1zM466 88h1v4h-1zM468 88h1v4h-1zM469 88h1v7h-1zM476 91h1v1h-1zM478 88h1v4h-1zM483 88h1v6h-1zM487 88h1v1h-1zM495 90h1v5h-1zM506 87h1v5h-1zM507 91h1v2h-1zM509 88h1v1h-1zM513 91h1v1h-1zM519 88h1v4h-1zM532 87h1v2h-1zM540 88h1v1h-1zM547 88h1v4h-1zM549 91h1v2h-1zM563 87h1v8h-1zM566 88h1v4h-1zM567 90h1v2h-1zM570 91h1v1h-1zM575 87h1v2h-1zM576 88h1v1h-1zM580 88h1v4h-1zM582 88h1v5h-1zM584 91h1v1h-1zM588 88h1v1h-1zM589 87h1v2h-1zM591 87h1v8h-1zM596 89h1v3h-1zM598 86h1v6h-1zM604 87h1v5h-1zM605 91h1v10h-1zM606 88h1v9h-1zM618 88h1v2h-1zM620 87h1v5h-1zM624 88h1v4h-1zM625 88h1v4h-1zM627 88h1v4h-1zM631 88h1v1h-1zM633 91h1v1h-1zM637 88h1v4h-1zM655 88h1v4h-1zM656 85h1v7h-1zM661 86h1v6h-1zM664 88h1v2h-1zM665 88h1v1h-1zM666 88h1v1h-1zM675 87h1v2h-1zM679 91h1v2h-1zM686 88h1v4h-1zM694 90h1v11h-1zM698 91h1v1h-1zM701 91h1v2h-1zM703 88h1v4h-1zM722 88h1v3h-1zM725 87h1v5h-1zM727 89h1v4h-1zM738 91h1v1h-1zM744 90h1v2h-1zM761 87h1v8h-1zM763 88h1v1h-1zM764 88h1v2h-1zM773 88h1v5h-1zM789 85h1v4h-1zM797 88h1v4h-1zM812 88h1v7h-1zM826 91h1v2h-1zM827 87h1v5h-1zM836 88h1v4h-1zM837 87h1v8h-1zM849 88h1v4h-1zM852 88h1v5h-1zM855 86h1v6h-1zM865 88h1v5h-1zM866 88h1v4h-1zM867 91h1v2h-1zM873 91h1v1h-1zM877 88h1v6h-1zM884 88h1v4h-1zM888 91h1v1h-1zM903 88h1v1h-1zM907 88h1v4h-1zM909 88h1v4h-1zM915 88h1v1h-1zM918 85h1v7h-1zM921 90h1v4h-1zM926 88h1v7h-1zM931 91h1v1h-1zM936 88h1v4h-1zM944 88h1v5h-1zM945 86h1v3h-1zM955 85h1v7h-1zM966 88h1v4h-1zM969 91h1v1h-1zM974 88h1v4h-1zM978 91h1v1h-1zM982 86h1v6h-1zM993 86h1v6h-1zM994 90h1v2h-1zM1006 86h1v7h-1zM1009 88h1v7h-1zM1015 88h1v3h-1zM1017 91h1v1h-1zM1020 88h1v1h-1z" fill="#009000"/><path d="M21 88h1v1h-1zM22 88h1v1h-1zM23 88h1v4h-1zM24 91h1v4h-1zM25 85h1v7h-1zM26 90h1v2h-1zM28 88h1v1h-1zM29 88h1v5h-1zM30 91h1v2h-1zM31 87h1v5h-1zM33 88h1v4h-1zM34 88h1v3h-1zM35 91h1v4h-1zM36 87h1v5h-1zM38 88h1v4h-1zM39 88h1v5h-1zM40 88h1v7h-1zM41 85h1v7h-1zM42 85h1v7h-1zM43 85h1v7h-1zM45 88h1v1h-1zM48 87h1v5h-1zM49 88h1v6h-1zM50 88h1v4h-1zM51 91h1v1h-1zM52 88h1v4h-1zM53 87h1v2h-1zM54 88h1v5h-1zM55 89h1v4h-1zM56 88h1v5h-1zM57 91h1v1h-1zM58 87h1v5h-1zM59 88h1v5h-1zM60 91h1v2h-1zM61 91h1v4h-1zM62 91h1v1h-1zM63 88h1v4h-1zM64 88h1v1h-1zM67 88h1v4h-1zM68 88h1v7h-1zM70 87h1v2h-1zM71 88h1v4h-1zM72 86h1v6h-1zM73 88h1v4h-1zM74 88h1v1h-1zM75 88h1v2h-1zM76 88h1v4h-1zM77 91h1v3h-1zM79 88h1v1h-1zM81 91h1v4h-1zM82 88h1v4h-1zM85 88h1v6h-1zM86 88h1v3h-1zM87 89h1v3h-1zM90 88h1v1h-1zM91 88h1v4h-1zM92 88h1v4h-1zM93 88h1v5h-1zM94 88h1v4h-1zM95 88h1v1h-1zM96 87h1v6h-1zM97 88h1v1h-1zM98 88h1v4h-1zM99 86h1v6h-1zM101 88h1v4h-1zM102 91h1v1h-1zM103 91h1v1h-1zM105 88h1v1h-1zM107 88h1v4h-1zM108 88h1v4h-1zM109 85h1v4h-1zM110 88h1v7h-1zM111 88h1v4h-1zM112 88h1v4h-1zM113 87h1v2h-1zM114 88h1v4h-1zM115 87h1v5h-1zM118 87h1v2h-1zM119 88h1v5h-1zM120 88h1v1h-1zM122 88h1v2h-1zM123 88h1v1h-1zM124 87h1v2h-1zM125 88h1v6h-1zM126 88h1v5h-1zM127 85h1v4h-1zM128 88h1v4h-1zM129 91h1v1h-1zM131 88h1v6h-1zM133 87h1v2h-1zM134 88h1v4h-1zM136 91h1v1h-1zM137 86h1v6h-1zM138 88h1v1h-1zM139 87h1v2h-1zM141 87h1v7h-1zM143 88h1v1h-1zM144 88h1v1h-1zM145 88h1v1h-1zM146 88h1v1h-1zM147 88h1v4h-1zM148 91h1v1h-1zM149 86h1v6h-1zM150 88h1v4h-1zM151 91h1v2h-1zM152 91h1v1h-1zM153 91h1v4h-1zM154 89h1v3h-1zM156 86h1v6h-1zM157 85h1v7h-1zM158 91h1v1h-1zM159 91h1v1h-1zM160 88h1v4h-1zM161 87h1v5h-1zM163 86h1v6h-1zM164 88h1v4h-1zM165 91h1v1h-1zM166 87h1v5h-1zM167 88h1v1h-1zM168 88h1v7h-1zM169 90h1v2h-1zM170 91h1v4h-1zM171 90h1v2h-1zM172 88h1v4h-1zM173 85h1v6h-1zM174 88h1v4h-1zM175 88h1v1h-1zM176 88h1v2h-1zM177 88h1v5h-1zM178 91h1v4h-1zM179 91h1v2h-1zM180 87h1v5h-1zM181 87h1v6h-1zM183 88h1v5h-1zM184 88h1v4h-1zM185 88h1v4h-1zM186 88h1v4h-1zM187 88h1v1h-1zM188 88h1v3h-1zM189 91h1v1h-1zM190 91h1v1h-1zM191 85h1v7h-1zM192 88h1v1h-1zM193 88h1v5h-1zM194 88h1v1h-1zM195 88h1v6h-1zM196 89h1v3h-1zM197 88h1v1h-1zM198 86h1v6h-1zM199 91h1v1h-1zM200 88h1v7h-1zM201 88h1v5h-1zM202 91h1v1h-1zM203 88h1v4h-1zM204 88h1v3h-1zM205 91h1v1h-1zM206 91h1v2h-1zM207 87h1v5h-1zM208 88h1v7h-1zM209 88h1v4h-1zM210 88h1v1h-1zM211 86h1v6h-1zM212 91h1v1h-1zM213 91h1v1h-1zM214 91h1v1h-1zM215 91h1v1h-1zM216 91h1v1h-1zM217 91h1v1h-1zM219 88h1v6h-1zM220 91h1v2h-1zM221 87h1v5h-1zM222 88h1v2h-1zM223 88h1v7h-1zM224 86h1v6h-1zM226 88h1v1h-1zM227 88h1v1h-1zM230 91h1v1h-1zM231 91h1v1h-1zM232 90h1v2h-1zM234 88h1v7h-1zM235 88h1v4h-1zM236 90h1v3h-1zM237 91h1v2h-1zM238 91h1v1h-1zM239 88h1v4h-1zM241 88h1v7h-1zM242 88h1v1h-1zM243 88h1v4h-1zM245 88h1v4h-1zM246 88h1v1h-1zM248 88h1v4h-1zM250 85h1v7h-1zM251 88h1v1h-1zM252 87h1v7h-1zM253 88h1v4h-1zM254 85h1v7h-1zM255 88h1v4h-1zM256 88h1v4h-1zM257 90h1v4h-1zM258 89h1v3h-1zM260 88h1v4h-1zM261 88h1v4h-1zM262 91h1v1h-1zM263 86h1v7h-1zM264 88h1v4h-1zM265 88h1v1h-1zM266 88h1v4h-1zM269 88h1v1h-1zM270 88h1v4h-1zM272 88h1v6h-1zM273 90h1v5h-1zM274 91h1v3h-1zM275 90h1v3h-1zM276 91h1v2h-1zM277 91h1v1h-1zM278 91h1v4h-1zM279 91h1v1h-1zM280 91h1v2h-1zM281 88h1v4h-1zM282 88h1v6h-1zM283 88h1v4h-1zM284 88h1v1h-1zM285 88h1v4h-1zM286 91h1v1h-1zM287 88h1v4h-1zM288 88h1v1h-1zM289 88h1v5h-1zM290 85h1v7h-1zM291 86h1v3h-1zM293 88h1v7h-1zM294 88h1v1h-1zM295 88h1v1h-1zM296 88h1v7h-1zM297 88h1v2h-1zM299 86h1v7h-1zM300 85h1v7h-1zM301 88h1v4h-1zM302 88h1v6h-1zM303 90h1v4h-1zM304 90h1v2h-1zM305 88h1v4h-1zM306 88h1v1h-1zM307 88h1v1h-1zM308 88h1v1h-1zM309 88h1v5h-1zM310 87h1v2h-1zM311 88h1v7h-1zM312 87h1v2h-1zM314 88h1v4h-1zM315 91h1v3h-1zM316 91h1v1h-1zM317 85h1v7h-1zM318 87h1v2h-1zM319 88h1v4h-1zM320 88h1v4h-1zM321 88h1v4h-1zM322 88h1v4h-1zM323 88h1v1h-1zM325 88h1v5h-1zM326 91h1v4h-1zM327 88h1v6h-1zM328 88h1v3h-1zM329 90h1v2h-1zM331 87h1v5h-1zM332 91h1v1h-1zM333 89h1v3h-1zM334 88h1v1h-1zM335 88h1v1h-1zM336 86h1v3h-1zM337 88h1v1h-1zM338 87h1v5h-1zM339 88h1v4h-1zM340 88h1v4h-1zM341 91h1v2h-1zM342 87h1v5h-1zM343 88h1v1h-1zM345 85h1v6h-1zM346 87h1v5h-1zM347 88h1v1h-1zM348 88h1v2h-1zM349 87h1v5h-1zM350 87h1v5h-1zM352 85h1v4h-1zM353 89h1v1h-1zM360 350h1v6h-1zM364 220h1v2h-1zM377 95h1v7h-1zM379 100h1v4h-1zM380 97h1v4h-1zM383 92h1v4h-1zM384 92h1v2h-1zM394 129h1v6h-1zM400 135h1v4h-1zM404 92h1v5h-1zM405 92h1v4h-1zM406 95h1v4h-1zM408 88h1v3h-1zM410 90h1v3h-1zM411 92h1v1h-1zM412 91h1v2h-1zM413 91h1v2h-1zM414 92h1v2h-1zM417 97h1v4h-1zM418 96h1v5h-1zM423 88h1v3h-1zM424 90h1v2h-1zM425 91h1v3h-1zM426 93h1v3h-1zM433 94h1v2h-1zM436 95h1v4h-1zM437 92h1v4h-1zM438 90h1v3h-1zM440 88h1v1h-1zM441 88h1v2h-1zM442 87h1v3h-1zM443 86h1v2h-1zM444 84h1v3h-1zM445 84h1v4h-1zM447 90h1v4h-1zM448 93h1v3h-1zM449 95h1v4h-1zM450 95h1v4h-1zM451 92h1v4h-1zM452 90h1v3h-1zM453 87h1v4h-1zM454 87h1v5h-1zM455 91h1v5h-1zM456 93h1v3h-1zM457 91h1v3h-1zM458 89h1v3h-1zM460 91h1v2h-1zM461 89h1v3h-1zM462 88h1v2h-1zM463 88h1v1h-1zM464 86h1v4h-1zM465 86h1v4h-1zM467 90h1v2h-1zM470 88h1v7h-1zM471 88h1v5h-1zM472 88h1v5h-1zM473 87h1v5h-1zM474 87h1v2h-1zM475 88h1v6h-1zM477 88h1v6h-1zM479 87h1v5h-1zM480 88h1v1h-1zM481 86h1v6h-1zM482 88h1v4h-1zM484 88h1v7h-1zM485 88h1v4h-1zM486 85h1v7h-1zM488 87h1v2h-1zM489 88h1v7h-1zM490 87h1v5h-1zM491 88h1v4h-1zM492 86h1v6h-1zM493 91h1v1h-1zM494 91h1v1h-1zM496 91h1v4h-1zM497 91h1v1h-1zM498 88h1v5h-1zM499 88h1v4h-1zM500 91h1v4h-1zM501 85h1v7h-1zM502 88h1v6h-1zM503 87h1v5h-1zM504 87h1v6h-1zM505 88h1v4h-1zM508 88h1v4h-1zM510 88h1v7h-1zM511 91h1v1h-1zM512 91h1v1h-1zM514 88h1v4h-1zM515 88h1v4h-1zM516 91h1v1h-1zM517 86h1v6h-1zM518 87h1v5h-1zM520 91h1v1h-1zM521 88h1v6h-1zM522 88h1v1h-1zM523 88h1v4h-1zM524 91h1v1h-1zM525 86h1v6h-1zM526 91h1v1h-1zM527 91h1v2h-1zM528 88h1v4h-1zM529 88h1v4h-1zM530 91h1v2h-1zM531 87h1v5h-1zM533 88h1v4h-1zM534 91h1v1h-1zM535 88h1v4h-1zM536 88h1v1h-1zM537 88h1v5h-1zM538 91h1v1h-1zM539 88h1v4h-1zM541 87h1v2h-1zM542 88h1v2h-1zM543 88h1v6h-1zM544 91h1v2h-1zM545 91h1v1h-1zM546 87h1v5h-1zM548 91h1v1h-1zM550 91h1v1h-1zM551 88h1v4h-1zM552 88h1v3h-1zM553 91h1v1h-1zM554 91h1v1h-1zM555 87h1v5h-1zM556 88h1v4h-1zM557 91h1v3h-1zM558 85h1v7h-1zM559 87h1v5h-1zM560 91h1v1h-1zM561 88h1v4h-1zM562 88h1v4h-1zM564 86h1v6h-1zM565 88h1v4h-1zM568 91h1v1h-1zM569 86h1v6h-1zM571 91h1v3h-1zM572 91h1v2h-1zM573 91h1v1h-1zM574 86h1v6h-1zM577 88h1v5h-1zM578 88h1v4h-1zM579 87h1v5h-1zM581 86h1v3h-1zM583 85h1v7h-1zM585 87h1v5h-1zM586 88h1v5h-1zM587 87h1v5h-1zM590 87h1v5h-1zM592 88h1v6h-1zM593 88h1v5h-1zM594 88h1v7h-1zM595 88h1v5h-1zM597 88h1v3h-1zM599 86h1v4h-1zM600 88h1v1h-1zM601 88h1v7h-1zM602 91h1v1h-1zM603 91h1v3h-1zM607 88h1v3h-1zM608 91h1v1h-1zM609 89h1v4h-1zM610 85h1v4h-1zM611 88h1v4h-1zM612 91h1v1h-1zM613 90h1v5h-1zM614 91h1v2h-1zM615 88h1v4h-1zM616 88h1v1h-1zM617 87h1v2h-1zM619 88h1v5h-1zM621 86h1v3h-1zM622 85h1v7h-1zM623 91h1v2h-1zM626 88h1v7h-1zM628 89h1v4h-1zM629 88h1v1h-1zM630 88h1v2h-1zM632 88h1v5h-1zM634 88h1v4h-1zM635 87h1v4h-1zM636 89h1v3h-1zM638 88h1v4h-1zM639 88h1v7h-1zM640 88h1v1h-1zM641 88h1v5h-1zM642 88h1v1h-1zM643 88h1v6h-1zM644 87h1v2h-1zM645 88h1v1h-1zM646 88h1v1h-1zM647 86h1v3h-1zM648 88h1v6h-1zM649 88h1v5h-1zM650 88h1v5h-1zM651 91h1v1h-1zM652 87h1v5h-1zM653 91h1v2h-1zM654 87h1v5h-1zM657 91h1v1h-1zM658 91h1v3h-1zM659 87h1v5h-1zM660 87h1v2h-1zM662 88h1v4h-1zM663 87h1v2h-1zM667 88h1v4h-1zM668 90h1v2h-1zM669 88h1v4h-1zM670 88h1v5h-1zM671 88h1v1h-1zM672 88h1v4h-1zM673 85h1v7h-1zM674 89h1v3h-1zM676 87h1v7h-1zM677 88h1v5h-1zM678 90h1v2h-1zM680 89h1v3h-1zM681 87h1v2h-1zM682 86h1v3h-1zM683 88h1v3h-1zM684 88h1v4h-1zM685 88h1v1h-1zM687 91h1v1h-1zM688 91h1v1h-1zM689 91h1v1h-1zM690 88h1v7h-1zM691 88h1v1h-1zM692 87h1v5h-1zM693 91h1v4h-1zM695 91h1v6h-1zM696 91h1v1h-1zM697 91h1v1h-1zM699 88h1v5h-1zM700 88h1v4h-1zM702 88h1v4h-1zM704 91h1v1h-1zM705 91h1v1h-1zM706 88h1v4h-1zM707 86h1v3h-1zM708 88h1v1h-1zM709 88h1v4h-1zM710 91h1v1h-1zM711 87h1v5h-1zM712 88h1v3h-1zM713 91h1v2h-1zM714 88h1v4h-1zM715 86h1v6h-1zM716 88h1v4h-1zM717 88h1v7h-1zM718 91h1v2h-1zM719 90h1v2h-1zM720 91h1v2h-1zM721 88h1v6h-1zM723 91h1v1h-1zM724 86h1v7h-1zM726 91h1v1h-1zM728 86h1v3h-1zM729 88h1v6h-1zM730 87h1v5h-1zM731 88h1v1h-1zM732 88h1v1h-1zM733 88h1v1h-1zM734 88h1v4h-1zM735 91h1v1h-1zM736 85h1v7h-1zM737 85h1v7h-1zM739 91h1v1h-1zM740 91h1v1h-1zM741 90h1v2h-1zM742 88h1v4h-1zM743 88h1v7h-1zM745 91h1v1h-1zM746 91h1v1h-1zM747 90h1v3h-1zM748 91h1v2h-1zM749 91h1v1h-1zM750 90h1v2h-1zM751 88h1v7h-1zM752 88h1v7h-1zM753 89h1v4h-1zM754 88h1v1h-1zM755 88h1v1h-1zM756 88h1v1h-1zM757 88h1v3h-1zM758 88h1v6h-1zM759 88h1v4h-1zM760 87h1v6h-1zM762 88h1v1h-1zM765 85h1v7h-1zM766 88h1v7h-1zM767 88h1v4h-1zM768 85h1v7h-1zM769 88h1v4h-1zM770 86h1v6h-1zM771 91h1v1h-1zM772 87h1v5h-1zM774 88h1v1h-1zM775 86h1v7h-1zM776 85h1v7h-1zM777 88h1v5h-1zM778 88h1v5h-1zM779 91h1v1h-1zM780 85h1v7h-1zM781 88h1v4h-1zM782 88h1v4h-1zM783 88h1v5h-1zM784 86h1v3h-1zM785 87h1v2h-1zM786 88h1v1h-1zM787 88h1v1h-1zM788 88h1v1h-1zM790 88h1v4h-1zM791 88h1v6h-1zM792 88h1v4h-1zM793 91h1v2h-1zM794 91h1v4h-1zM795 87h1v5h-1zM796 88h1v1h-1zM798 91h1v2h-1zM799 86h1v6h-1zM800 91h1v1h-1zM801 91h1v1h-1zM802 90h1v2h-1zM803 88h1v4h-1zM804 88h1v6h-1zM805 89h1v3h-1zM806 88h1v4h-1zM807 91h1v3h-1zM808 87h1v5h-1zM809 88h1v6h-1zM810 91h1v1h-1zM811 88h1v4h-1zM813 89h1v3h-1zM814 88h1v4h-1zM815 87h1v5h-1zM816 85h1v7h-1zM817 88h1v4h-1zM818 88h1v1h-1zM819 87h1v2h-1zM820 88h1v1h-1zM821 87h1v2h-1zM822 88h1v5h-1zM823 90h1v2h-1zM824 87h1v5h-1zM825 88h1v6h-1zM828 86h1v6h-1zM829 90h1v2h-1zM830 86h1v6h-1zM831 88h1v5h-1zM832 88h1v1h-1zM833 88h1v5h-1zM834 91h1v4h-1zM835 87h1v5h-1zM838 88h1v5h-1zM839 91h1v1h-1zM840 86h1v6h-1zM841 88h1v1h-1zM842 87h1v5h-1zM843 91h1v2h-1zM844 91h1v1h-1zM845 91h1v1h-1zM846 85h1v7h-1zM847 91h1v2h-1zM848 91h1v1h-1zM850 88h1v7h-1zM851 88h1v2h-1zM853 87h1v6h-1zM854 88h1v4h-1zM856 88h1v1h-1zM857 88h1v1h-1zM858 88h1v2h-1zM859 88h1v1h-1zM860 88h1v1h-1zM861 88h1v1h-1zM862 87h1v2h-1zM863 88h1v1h-1zM864 88h1v4h-1zM868 88h1v5h-1zM869 88h1v1h-1zM870 88h1v1h-1zM871 88h1v4h-1zM872 91h1v1h-1zM874 87h1v5h-1zM875 87h1v5h-1zM876 88h1v4h-1zM878 91h1v1h-1zM879 91h1v4h-1zM880 87h1v5h-1zM881 86h1v4h-1zM882 88h1v7h-1zM883 87h1v5h-1zM885 88h1v4h-1zM886 87h1v5h-1zM887 91h1v3h-1zM889 88h1v5h-1zM890 88h1v6h-1zM891 88h1v4h-1zM892 91h1v2h-1zM893 91h1v3h-1zM894 89h1v3h-1zM895 86h1v3h-1zM896 85h1v7h-1zM897 88h1v4h-1zM898 88h1v5h-1zM899 89h1v3h-1zM900 87h1v2h-1zM901 87h1v2h-1zM902 86h1v3h-1zM904 88h1v1h-1zM905 88h1v1h-1zM906 88h1v1h-1zM908 86h1v6h-1zM910 88h1v4h-1zM911 88h1v4h-1zM912 88h1v4h-1zM913 88h1v4h-1zM914 88h1v1h-1zM916 85h1v7h-1zM917 86h1v6h-1zM919 91h1v1h-1zM920 91h1v1h-1zM922 91h1v1h-1zM923 87h1v5h-1zM924 88h1v1h-1zM925 87h1v2h-1zM927 88h1v2h-1zM928 88h1v1h-1zM929 88h1v1h-1zM930 87h1v5h-1zM932 91h1v1h-1zM933 88h1v4h-1zM934 87h1v2h-1zM935 88h1v2h-1zM937 88h1v4h-1zM938 88h1v4h-1zM939 91h1v2h-1zM940 90h1v2h-1zM941 91h1v4h-1zM942 90h1v2h-1zM943 91h1v2h-1zM946 88h1v1h-1zM947 88h1v7h-1zM948 85h1v7h-1zM949 91h1v1h-1zM950 91h1v1h-1zM951 91h1v1h-1zM952 89h1v3h-1zM953 87h1v5h-1zM954 91h1v1h-1zM956 86h1v4h-1zM957 88h1v7h-1zM958 86h1v6h-1zM959 88h1v1h-1zM960 88h1v2h-1zM961 88h1v3h-1zM962 91h1v4h-1zM963 86h1v6h-1zM964 88h1v4h-1zM965 85h1v7h-1zM967 88h1v2h-1zM968 88h1v4h-1zM970 88h1v4h-1zM971 88h1v2h-1zM972 88h1v5h-1zM973 88h1v7h-1zM975 88h1v4h-1zM976 86h1v3h-1zM977 85h1v6h-1zM979 91h1v3h-1zM980 87h1v5h-1zM981 88h1v4h-1zM983 86h1v6h-1zM984 88h1v1h-1zM985 88h1v5h-1zM986 87h1v5h-1zM987 88h1v6h-1zM988 88h1v5h-1zM989 88h1v5h-1zM990 88h1v5h-1zM991 88h1v4h-1zM992 86h1v6h-1zM995 88h1v4h-1zM996 88h1v4h-1zM997 86h1v6h-1zM998 86h1v6h-1zM999 91h1v1h-1zM1000 85h1v7h-1zM1001 88h1v4h-1zM1002 91h1v1h-1zM1003 88h1v4h-1zM1004 88h1v4h-1zM1005 91h1v2h-1zM1007 86h1v6h-1zM1008 91h1v1h-1zM1010 87h1v7h-1zM1011 87h1v2h-1zM1012 88h1v7h-1zM1013 88h1v1h-1zM1014 87h1v2h-1zM1016 85h1v7h-1zM1018 89h1v4h-1zM1019 88h1v6h-1z" fill="#00ff00"/>
<path d="M27 475h1v6h-1zM32 480h1v2h-1zM37 479h1v2h-1zM44 475h1v3h-1zM46 477h1v7h-1zM47 475h1v6h-1zM56 474h1v8h-1zM66 477h1v5h-1zM67 477h1v4h-1zM70 479h1v2h-1zM79 479h1v2h-1zM81 477h1v4h-1zM84 480h1v1h-1zM88 480h1v1h-1zM89 480h1v3h-1zM100 477h1v5h-1zM104 476h1v5h-1zM106 480h1v2h-1zM116 477h1v4h-1zM117 477h1v1h-1zM121 477h1v6h-1zM130 475h1v6h-1zM132 475h1v7h-1zM135 477h1v1h-1zM140 474h1v7h-1zM142 477h1v5h-1zM155 477h1v4h-1zM162 477h1v1h-1zM182 478h1v3h-1zM218 479h1v2h-1zM225 480h1v2h-1zM228 475h1v3h-1zM229 477h1v4h-1zM233 477h1v6h-1zM240 477h1v4h-1zM244 477h1v4h-1zM247 474h1v8h-1zM248 480h1v1h-1zM250 476h1v2h-1zM260 479h1v3h-1zM268 476h1v6h-1zM269 477h1v4h-1zM272 477h1v4h-1zM293 476h1v5h-1zM299 477h1v4h-1zM314 475h1v6h-1zM325 477h1v4h-1zM331 475h1v6h-1zM345 476h1v2h-1zM352 477h1v4h-1zM360 477h1v4h-1zM365 475h1v6h-1zM370 477h1v1h-1zM372 476h1v8h-1zM377 474h1v4h-1zM380 477h1v5h-1zM385 479h1v2h-1zM386 480h1v1h-1zM388 480h1v1h-1zM389 480h1v1h-1zM393 480h1v2h-1zM400 477h1v1h-1zM413 477h1v5h-1zM420 477h1v4h-1zM422 474h1v7h-1zM423 477h1v4h-1zM430 476h1v8h-1zM431 477h1v5h-1zM433 477h1v7h-1zM438 477h1v3h-1zM442 480h1v1h-1zM450 480h1v1h-1zM461 477h1v4h-1zM462 475h1v3h-1zM464 476h1v3h-1zM468 480h1v2h-1zM474 477h1v1h-1zM487 475h1v7h-1zM495 477h1v4h-1zM502 477h1v1h-1zM504 474h1v6h-1zM520 477h1v7h-1zM521 480h1v3h-1zM524 480h1v1h-1zM529 474h1v8h-1zM530 476h1v5h-1zM531 479h1v3h-1zM535 480h1v1h-1zM537 475h1v4h-1zM539 477h1v6h-1zM543 480h1v1h-1zM544 480h1v4h-1zM550 474h1v7h-1zM552 474h1v7h-1zM556 476h1v8h-1zM559 477h1v6h-1zM571 474h1v8h-1zM572 478h1v3h-1zM574 477h1v4h-1zM578 477h1v4h-1zM579 474h1v4h-1zM581 477h1v5h-1zM585 480h1v2h-1zM587 477h1v7h-1zM591 477h1v5h-1zM609 478h1v6h-1zM610 477h1v1h-1zM615 477h1v4h-1zM618 477h1v4h-1zM619 480h1v1h-1zM620 480h1v1h-1zM629 477h1v4h-1zM633 476h1v2h-1zM640 480h1v2h-1zM651 476h1v2h-1zM654 476h1v5h-1zM656 477h1v4h-1zM675 474h1v7h-1zM678 479h1v3h-1zM680 480h1v2h-1zM691 477h1v4h-1zM692 474h1v8h-1zM698 477h1v5h-1zM716 477h1v3h-1zM717 480h1v1h-1zM726 474h1v4h-1zM730 476h1v8h-1zM743 480h1v1h-1zM751 475h1v3h-1zM766 480h1v1h-1zM780 477h1v6h-1zM781 476h1v4h-1zM790 477h1v4h-1zM802 477h1v1h-1zM805 477h1v5h-1zM808 480h1v1h-1zM818 475h1v4h-1zM819 477h1v3h-1zM820 477h1v7h-1zM826 477h1v4h-1zM830 477h1v5h-1zM837 476h1v8h-1zM838 477h1v7h-1zM842 480h1v1h-1zM857 475h1v3h-1zM861 479h1v2h-1zM863 477h1v2h-1zM869 477h1v7h-1zM872 476h1v6h-1zM875 480h1v4h-1zM880 478h1v3h-1zM885 480h1v1h-1zM890 477h1v1h-1zM898 477h1v4h-1zM899 477h1v4h-1zM909 477h1v1h-1zM914 474h1v8h-1zM921 477h1v1h-1zM924 480h1v2h-1zM929 477h1v4h-1zM933 477h1v4h-1zM937 480h1v1h-1zM948 477h1v7h-1zM949 477h1v2h-1zM961 475h1v3h-1zM964 477h1v4h-1zM970 480h1v1h-1zM972 477h1v7h-1zM974 474h1v8h-1zM976 480h1v4h-1zM990 476h1v2h-1zM999 480h1v1h-1zM1005 480h1v4h-1zM1006 475h1v6h-1zM1008 474h1v4h-1z" fill="#a000a0"/><path d="M21 476h1v6h-1zM22 480h1v2h-1zM23 480h1v2h-1zM24 477h1v6h-1zM25 477h1v5h-1zM26 480h1v1h-1zM28 477h1v4h-1zM29 480h1v2h-1zM30 475h1v6h-1zM31 477h1v4h-1zM33 480h1v4h-1zM34 474h1v7h-1zM35 477h1v4h-1zM36 477h1v4h-1zM38 477h1v4h-1zM39 477h1v3h-1zM40 476h1v5h-1zM41 474h1v4h-1zM42 477h1v1h-1zM43 477h1v1h-1zM45 477h1v5h-1zM48 480h1v1h-1zM49 480h1v1h-1zM50 478h1v5h-1zM51 477h1v5h-1zM52 480h1v1h-1zM53 476h1v5h-1zM54 477h1v6h-1zM55 480h1v2h-1zM57 477h1v4h-1zM58 475h1v5h-1zM59 476h1v5h-1zM60 477h1v1h-1zM61 477h1v1h-1zM62 477h1v5h-1zM63 476h1v5h-1zM64 480h1v1h-1zM65 477h1v4h-1zM68 477h1v4h-1zM69 476h1v5h-1zM71 477h1v4h-1zM72 477h1v6h-1zM73 477h1v4h-1zM74 478h1v3h-1zM75 477h1v2h-1zM76 477h1v4h-1zM77 477h1v4h-1zM78 477h1v4h-1zM80 477h1v7h-1zM82 480h1v3h-1zM83 480h1v2h-1zM85 477h1v4h-1zM86 477h1v2h-1zM87 477h1v4h-1zM90 480h1v4h-1zM91 480h1v1h-1zM92 476h1v7h-1zM93 477h1v2h-1zM94 477h1v7h-1zM95 477h1v4h-1zM96 477h1v1h-1zM97 477h1v4h-1zM98 478h1v3h-1zM99 477h1v1h-1zM101 476h1v2h-1zM102 476h1v2h-1zM103 477h1v1h-1zM105 476h1v5h-1zM107 480h1v1h-1zM108 479h1v2h-1zM109 475h1v6h-1zM110 477h1v4h-1zM111 477h1v3h-1zM112 479h1v4h-1zM113 480h1v1h-1zM114 480h1v4h-1zM115 480h1v1h-1zM118 477h1v7h-1zM119 476h1v5h-1zM120 478h1v3h-1zM122 477h1v1h-1zM123 477h1v4h-1zM124 480h1v2h-1zM125 480h1v1h-1zM126 477h1v4h-1zM127 477h1v1h-1zM128 477h1v1h-1zM129 475h1v6h-1zM131 480h1v1h-1zM133 480h1v3h-1zM134 474h1v7h-1zM136 475h1v4h-1zM137 476h1v5h-1zM138 475h1v6h-1zM139 477h1v5h-1zM141 477h1v6h-1zM143 477h1v1h-1zM144 477h1v1h-1zM145 477h1v1h-1zM146 474h1v4h-1zM147 477h1v1h-1zM148 477h1v3h-1zM149 477h1v4h-1zM150 477h1v4h-1zM151 477h1v4h-1zM152 477h1v1h-1zM153 477h1v5h-1zM154 477h1v4h-1zM156 477h1v4h-1zM157 477h1v7h-1zM158 477h1v4h-1zM159 480h1v1h-1zM160 477h1v4h-1zM161 477h1v1h-1zM163 477h1v2h-1zM164 477h1v2h-1zM165 477h1v1h-1zM166 477h1v4h-1zM167 479h1v2h-1zM168 480h1v1h-1zM169 476h1v5h-1zM170 480h1v1h-1zM171 475h1v6h-1zM172 477h1v4h-1zM173 477h1v4h-1zM174 477h1v4h-1zM175 477h1v4h-1zM176 477h1v1h-1zM177 476h1v2h-1zM178 476h1v5h-1zM179 480h1v1h-1zM180 480h1v2h-1zM181 480h1v1h-1zM183 477h1v1h-1zM184 477h1v7h-1zM185 480h1v1h-1zM186 476h1v5h-1zM187 477h1v7h-1zM188 477h1v7h-1zM189 474h1v7h-1zM190 474h1v7h-1zM191 477h1v4h-1zM192 480h1v2h-1zM193 480h1v1h-1zM194 480h1v3h-1zM195 480h1v2h-1zM196 480h1v3h-1zM197 480h1v3h-1zM198 476h1v7h-1zM199 476h1v6h-1zM200 477h1v1h-1zM201 477h1v1h-1zM202 477h1v4h-1zM203 480h1v4h-1zM204 474h1v7h-1zM205 477h1v6h-1zM206 477h1v5h-1zM207 477h1v7h-1zM208 477h1v6h-1zM209 477h1v5h-1zM210 480h1v1h-1zM211 477h1v4h-1zM212 477h1v1h-1zM213 477h1v1h-1zM214 477h1v3h-1zM215 480h1v1h-1zM216 477h1v4h-1zM217 477h1v4h-1zM219 476h1v5h-1zM220 477h1v4h-1zM221 477h1v1h-1zM222 477h1v1h-1zM223 477h1v4h-1zM224 479h1v3h-1zM226 480h1v4h-1zM227 477h1v7h-1zM230 480h1v4h-1zM231 477h1v4h-1zM232 477h1v1h-1zM234 477h1v1h-1zM235 477h1v1h-1zM236 477h1v6h-1zM237 480h1v1h-1zM238 475h1v6h-1zM239 476h1v5h-1zM241 480h1v1h-1zM242 475h1v6h-1zM243 477h1v2h-1zM245 475h1v6h-1zM246 478h1v3h-1zM249 477h1v4h-1zM251 477h1v4h-1zM252 479h1v2h-1zM253 477h1v4h-1zM254 477h1v3h-1zM255 475h1v6h-1zM256 480h1v2h-1zM257 474h1v7h-1zM258 474h1v7h-1zM259 480h1v1h-1zM261 475h1v6h-1zM262 477h1v7h-1zM263 476h1v2h-1zM264 477h1v5h-1zM265 480h1v1h-1zM266 480h1v2h-1zM267 477h1v4h-1zM270 476h1v5h-1zM271 477h1v3h-1zM273 477h1v3h-1zM274 480h1v3h-1zM275 480h1v2h-1zM276 480h1v1h-1zM277 477h1v7h-1zM278 477h1v1h-1zM279 477h1v1h-1zM280 475h1v3h-1zM281 477h1v1h-1zM282 477h1v1h-1zM283 477h1v4h-1zM284 477h1v4h-1zM285 477h1v1h-1zM286 477h1v7h-1zM287 476h1v2h-1zM288 477h1v4h-1zM289 480h1v4h-1zM290 480h1v4h-1zM291 476h1v5h-1zM292 476h1v4h-1zM294 477h1v1h-1zM295 477h1v4h-1zM296 479h1v2h-1zM297 475h1v6h-1zM298 480h1v1h-1zM300 476h1v2h-1zM301 474h1v4h-1zM302 475h1v4h-1zM303 477h1v5h-1zM304 477h1v4h-1zM305 477h1v4h-1zM306 476h1v5h-1zM307 476h1v5h-1zM308 477h1v1h-1zM309 474h1v6h-1zM310 477h1v4h-1zM311 477h1v5h-1zM312 476h1v5h-1zM313 480h1v2h-1zM315 480h1v1h-1zM316 475h1v6h-1zM317 480h1v2h-1zM318 477h1v4h-1zM319 477h1v6h-1zM320 477h1v4h-1zM321 477h1v4h-1zM322 477h1v7h-1zM323 475h1v6h-1zM324 480h1v1h-1zM326 477h1v2h-1zM327 476h1v2h-1zM328 477h1v4h-1zM329 476h1v5h-1zM330 476h1v5h-1zM332 478h1v3h-1zM333 477h1v6h-1zM334 477h1v4h-1zM335 475h1v3h-1zM336 474h1v5h-1zM337 477h1v1h-1zM338 477h1v4h-1zM339 480h1v1h-1zM340 480h1v1h-1zM341 480h1v1h-1zM342 479h1v4h-1zM343 480h1v1h-1zM344 475h1v6h-1zM346 477h1v1h-1zM347 477h1v4h-1zM348 479h1v2h-1zM349 480h1v1h-1zM350 480h1v2h-1zM351 480h1v1h-1zM353 477h1v4h-1zM354 479h1v2h-1zM355 474h1v7h-1zM356 476h1v5h-1zM357 477h1v1h-1zM358 477h1v1h-1zM359 477h1v1h-1zM361 477h1v7h-1zM362 477h1v3h-1zM363 480h1v1h-1zM364 480h1v1h-1zM366 476h1v2h-1zM367 475h1v6h-1zM368 477h1v4h-1zM369 476h1v2h-1zM371 474h1v4h-1zM373 477h1v7h-1zM374 477h1v4h-1zM375 477h1v2h-1zM376 475h1v3h-1zM378 477h1v5h-1zM379 480h1v1h-1zM381 476h1v2h-1zM382 477h1v1h-1zM383 477h1v7h-1zM384 476h1v5h-1zM387 479h1v4h-1zM390 474h1v7h-1zM391 476h1v2h-1zM392 477h1v4h-1zM394 476h1v5h-1zM395 477h1v4h-1zM396 477h1v1h-1zM397 477h1v5h-1zM398 476h1v6h-1zM399 477h1v4h-1zM401 477h1v5h-1zM402 480h1v1h-1zM403 480h1v1h-1zM404 480h1v1h-1zM405 474h1v7h-1zM406 477h1v6h-1zM407 477h1v1h-1zM408 477h1v1h-1zM409 476h1v2h-1zM410 477h1v1h-1zM411 477h1v7h-1zM412 477h1v4h-1zM414 477h1v4h-1zM415 477h1v1h-1zM416 475h1v6h-1zM417 475h1v6h-1zM418 477h1v5h-1zM419 476h1v5h-1zM421 477h1v1h-1zM424 477h1v1h-1zM425 477h1v2h-1zM426 477h1v2h-1zM427 476h1v5h-1zM428 477h1v4h-1zM429 477h1v4h-1zM432 477h1v4h-1zM434 477h1v1h-1zM435 477h1v1h-1zM436 477h1v7h-1zM437 477h1v4h-1zM439 480h1v1h-1zM440 479h1v2h-1zM441 480h1v3h-1zM443 480h1v1h-1zM444 480h1v1h-1zM445 476h1v5h-1zM446 477h1v2h-1zM447 477h1v5h-1zM448 478h1v3h-1zM449 477h1v5h-1zM451 477h1v6h-1zM452 474h1v6h-1zM453 477h1v4h-1zM454 475h1v6h-1zM455 474h1v7h-1zM456 477h1v1h-1zM457 477h1v1h-1zM458 477h1v4h-1zM459 480h1v1h-1zM460 480h1v3h-1zM463 477h1v2h-1zM465 475h1v3h-1zM466 477h1v4h-1zM467 480h1v3h-1zM469 476h1v5h-1zM470 477h1v1h-1zM471 477h1v1h-1zM472 477h1v6h-1zM473 477h1v7h-1zM475 477h1v1h-1zM476 477h1v2h-1zM477 476h1v5h-1zM478 477h1v4h-1zM479 477h1v4h-1zM480 476h1v6h-1zM481 477h1v1h-1zM482 477h1v3h-1zM483 480h1v1h-1zM484 477h1v4h-1zM485 474h1v7h-1zM486 477h1v4h-1zM488 477h1v5h-1zM489 477h1v6h-1zM490 477h1v4h-1zM491 477h1v1h-1zM492 477h1v3h-1zM493 479h1v2h-1zM494 475h1v7h-1zM496 476h1v5h-1zM497 479h1v2h-1zM498 477h1v4h-1zM499 477h1v1h-1zM500 477h1v1h-1zM501 477h1v1h-1zM503 477h1v1h-1zM505 480h1v1h-1zM506 480h1v1h-1zM507 477h1v4h-1zM508 477h1v1h-1zM509 477h1v4h-1zM510 477h1v4h-1zM511 477h1v1h-1zM512 476h1v6h-1zM513 477h1v4h-1zM514 477h1v5h-1zM515 477h1v5h-1zM516 477h1v6h-1zM517 477h1v1h-1zM518 477h1v1h-1zM519 477h1v5h-1zM522 477h1v4h-1zM523 477h1v7h-1zM525 477h1v4h-1zM526 477h1v5h-1zM527 475h1v6h-1zM528 477h1v6h-1zM532 480h1v1h-1zM533 480h1v1h-1zM534 480h1v1h-1zM536 478h1v3h-1zM538 477h1v4h-1zM540 477h1v4h-1zM541 476h1v5h-1zM542 480h1v1h-1zM545 477h1v4h-1zM546 477h1v1h-1zM547 474h1v4h-1zM548 477h1v4h-1zM549 477h1v4h-1zM551 478h1v3h-1zM553 480h1v1h-1zM554 480h1v1h-1zM555 478h1v6h-1zM557 477h1v5h-1zM558 480h1v1h-1zM560 477h1v6h-1zM561 477h1v4h-1zM562 477h1v1h-1zM563 477h1v2h-1zM564 477h1v5h-1zM565 474h1v7h-1zM566 480h1v4h-1zM567 479h1v2h-1zM568 477h1v4h-1zM569 477h1v6h-1zM570 477h1v6h-1zM573 477h1v3h-1zM575 477h1v1h-1zM576 475h1v6h-1zM577 479h1v2h-1zM580 477h1v1h-1zM582 476h1v5h-1zM583 477h1v1h-1zM584 477h1v4h-1zM586 480h1v3h-1zM588 477h1v4h-1zM589 477h1v4h-1zM590 477h1v1h-1zM592 480h1v1h-1zM593 477h1v4h-1zM594 477h1v7h-1zM595 475h1v6h-1zM596 475h1v6h-1zM597 476h1v5h-1zM598 475h1v3h-1zM599 475h1v6h-1zM600 480h1v4h-1zM601 480h1v2h-1zM602 480h1v1h-1zM603 480h1v3h-1zM604 476h1v5h-1zM605 474h1v4h-1zM606 477h1v1h-1zM607 477h1v1h-1zM608 477h1v5h-1zM611 477h1v4h-1zM612 479h1v2h-1zM613 480h1v1h-1zM614 480h1v1h-1zM616 476h1v5h-1zM617 477h1v4h-1zM621 480h1v1h-1zM622 478h1v3h-1zM623 477h1v6h-1zM624 477h1v4h-1zM625 480h1v1h-1zM626 480h1v1h-1zM627 480h1v3h-1zM628 480h1v1h-1zM630 477h1v4h-1zM631 480h1v2h-1zM632 476h1v5h-1zM634 477h1v3h-1zM635 475h1v6h-1zM636 477h1v4h-1zM637 480h1v4h-1zM638 475h1v6h-1zM639 476h1v5h-1zM641 476h1v5h-1zM642 476h1v2h-1zM643 474h1v4h-1zM644 477h1v4h-1zM645 480h1v1h-1zM646 480h1v1h-1zM647 480h1v1h-1zM648 477h1v4h-1zM649 477h1v1h-1zM650 477h1v1h-1zM652 477h1v5h-1zM653 480h1v1h-1zM655 477h1v6h-1zM657 477h1v4h-1zM658 477h1v4h-1zM659 480h1v1h-1zM660 477h1v6h-1zM661 475h1v4h-1zM662 477h1v3h-1zM663 480h1v4h-1zM664 480h1v1h-1zM665 480h1v1h-1zM666 478h1v5h-1zM667 475h1v3h-1zM668 477h1v1h-1zM669 477h1v7h-1zM670 477h1v5h-1zM671 475h1v6h-1zM672 477h1v3h-1zM673 477h1v7h-1zM674 477h1v7h-1zM676 477h1v7h-1zM677 475h1v6h-1zM679 480h1v1h-1zM681 480h1v1h-1zM682 477h1v4h-1zM683 477h1v6h-1zM684 477h1v1h-1zM685 477h1v2h-1zM686 477h1v7h-1zM687 477h1v1h-1zM688 477h1v1h-1zM689 477h1v1h-1zM690 477h1v1h-1zM693 480h1v1h-1zM694 480h1v2h-1zM695 477h1v4h-1zM696 477h1v1h-1zM697 477h1v1h-1zM699 478h1v5h-1zM700 477h1v6h-1zM701 477h1v6h-1zM702 478h1v3h-1zM703 474h1v6h-1zM704 477h1v4h-1zM705 477h1v2h-1zM706 477h1v4h-1zM707 480h1v1h-1zM708 480h1v1h-1zM709 480h1v1h-1zM710 477h1v4h-1zM711 476h1v2h-1zM712 477h1v1h-1zM713 477h1v7h-1zM714 480h1v1h-1zM715 477h1v4h-1zM718 480h1v1h-1zM719 477h1v5h-1zM720 477h1v7h-1zM721 476h1v6h-1zM722 477h1v4h-1zM723 477h1v5h-1zM724 480h1v1h-1zM725 477h1v5h-1zM727 476h1v2h-1zM728 477h1v1h-1zM729 476h1v2h-1zM731 477h1v5h-1zM732 475h1v6h-1zM733 477h1v4h-1zM734 480h1v1h-1zM735 475h1v6h-1zM736 476h1v6h-1zM737 480h1v1h-1zM738 480h1v1h-1zM739 480h1v1h-1zM740 480h1v1h-1zM741 477h1v5h-1zM742 477h1v4h-1zM744 477h1v6h-1zM745 477h1v1h-1zM746 477h1v1h-1zM747 477h1v4h-1zM748 475h1v6h-1zM749 477h1v5h-1zM750 477h1v6h-1zM752 475h1v6h-1zM753 479h1v3h-1zM754 480h1v4h-1zM755 480h1v1h-1zM756 475h1v6h-1zM757 477h1v4h-1zM758 477h1v5h-1zM759 477h1v1h-1zM760 477h1v4h-1zM761 480h1v1h-1zM762 477h1v4h-1zM763 477h1v1h-1zM764 477h1v1h-1zM765 477h1v5h-1zM767 476h1v5h-1zM768 477h1v1h-1zM769 477h1v1h-1zM770 477h1v6h-1zM771 480h1v3h-1zM772 480h1v1h-1zM773 477h1v7h-1zM774 477h1v4h-1zM775 477h1v4h-1zM776 477h1v2h-1zM777 477h1v1h-1zM778 477h1v4h-1zM779 478h1v3h-1zM782 480h1v1h-1zM783 477h1v4h-1zM784 477h1v4h-1zM785 475h1v6h-1zM786 477h1v4h-1zM787 477h1v4h-1zM788 480h1v1h-1zM789 480h1v1h-1zM791 477h1v1h-1zM792 477h1v1h-1zM793 477h1v3h-1zM794 479h1v2h-1zM795 475h1v6h-1zM796 476h1v2h-1zM797 477h1v4h-1zM798 480h1v1h-1zM799 480h1v1h-1zM800 475h1v6h-1zM801 475h1v3h-1zM803 477h1v1h-1zM804 477h1v1h-1zM806 477h1v4h-1zM807 476h1v5h-1zM809 476h1v5h-1zM810 477h1v7h-1zM811 474h1v4h-1zM812 476h1v5h-1zM813 476h1v5h-1zM814 477h1v4h-1zM815 476h1v5h-1zM816 477h1v1h-1zM817 477h1v2h-1zM821 477h1v1h-1zM822 477h1v7h-1zM823 477h1v4h-1zM824 477h1v4h-1zM825 475h1v6h-1zM827 477h1v6h-1zM828 477h1v4h-1zM829 478h1v5h-1zM831 480h1v1h-1zM832 477h1v4h-1zM833 477h1v5h-1zM834 477h1v6h-1zM835 477h1v1h-1zM836 477h1v3h-1zM839 477h1v1h-1zM840 477h1v6h-1zM841 480h1v1h-1zM843 480h1v4h-1zM844 477h1v5h-1zM845 477h1v1h-1zM846 477h1v4h-1zM847 476h1v5h-1zM848 477h1v4h-1zM849 475h1v6h-1zM850 477h1v4h-1zM851 475h1v6h-1zM852 480h1v3h-1zM853 476h1v5h-1zM854 476h1v2h-1zM855 475h1v3h-1zM856 477h1v6h-1zM858 477h1v4h-1zM859 480h1v1h-1zM860 480h1v2h-1zM862 476h1v5h-1zM864 476h1v2h-1zM865 477h1v4h-1zM866 480h1v2h-1zM867 480h1v3h-1zM868 477h1v4h-1zM870 477h1v4h-1zM871 480h1v1h-1zM873 480h1v1h-1zM874 480h1v1h-1zM876 480h1v3h-1zM877 480h1v2h-1zM878 476h1v5h-1zM879 477h1v5h-1zM881 477h1v4h-1zM882 477h1v4h-1zM883 477h1v4h-1zM884 480h1v1h-1zM886 477h1v5h-1zM887 477h1v4h-1zM888 477h1v4h-1zM889 475h1v3h-1zM891 477h1v4h-1zM892 477h1v4h-1zM893 476h1v6h-1zM894 477h1v4h-1zM895 477h1v1h-1zM896 477h1v1h-1zM897 477h1v6h-1zM900 477h1v4h-1zM901 480h1v1h-1zM902 480h1v3h-1zM903 476h1v5h-1zM904 477h1v2h-1zM905 477h1v1h-1zM906 477h1v4h-1zM907 477h1v4h-1zM908 477h1v1h-1zM910 477h1v4h-1zM911 476h1v5h-1zM912 477h1v1h-1zM913 477h1v4h-1zM915 477h1v4h-1zM916 476h1v7h-1zM917 477h1v2h-1zM918 474h1v4h-1zM919 477h1v1h-1zM920 477h1v2h-1zM922 477h1v4h-1zM923 474h1v7h-1zM925 480h1v2h-1zM926 480h1v1h-1zM927 477h1v4h-1zM928 477h1v4h-1zM930 477h1v1h-1zM931 476h1v2h-1zM932 476h1v7h-1zM934 476h1v7h-1zM935 475h1v3h-1zM936 477h1v3h-1zM938 477h1v4h-1zM939 477h1v1h-1zM940 477h1v1h-1zM941 475h1v3h-1zM942 477h1v7h-1zM943 475h1v6h-1zM944 476h1v2h-1zM945 477h1v7h-1zM946 480h1v1h-1zM947 480h1v1h-1zM950 474h1v4h-1zM951 477h1v5h-1zM952 477h1v5h-1zM953 480h1v1h-1zM954 477h1v6h-1zM955 476h1v2h-1zM956 474h1v4h-1zM957 477h1v5h-1zM958 476h1v2h-1zM959 477h1v3h-1zM960 477h1v4h-1zM962 477h1v1h-1zM963 477h1v4h-1zM965 477h1v4h-1zM966 476h1v5h-1zM967 475h1v3h-1zM968 477h1v4h-1zM969 480h1v2h-1zM971 476h1v5h-1zM973 477h1v5h-1zM975 476h1v5h-1zM977 478h1v5h-1zM978 477h1v5h-1zM979 480h1v4h-1zM980 477h1v6h-1zM981 477h1v1h-1zM982 474h1v4h-1zM983 477h1v7h-1zM984 477h1v5h-1zM985 480h1v1h-1zM986 477h1v4h-1zM987 477h1v1h-1zM988 477h1v5h-1zM989 477h1v4h-1zM991 475h1v3h-1zM992 477h1v4h-1zM993 475h1v6h-1zM994 476h1v2h-1zM995 477h1v2h-1zM996 474h1v6h-1zM997 477h1v4h-1zM998 477h1v7h-1zM1000 480h1v1h-1zM1001 477h1v4h-1zM1002 477h1v1h-1zM1003 477h1v4h-1zM1004 476h1v5h-1zM1007 477h1v5h-1zM1009 477h1v1h-1zM1010 477h1v1h-1zM1011 477h1v1h-1zM1012 477h1v1h-1zM1013 477h1v3h-1zM1014 480h1v4h-1zM1015 480h1v4h-1zM1016 480h1v3h-1zM1017 477h1v6h-1zM1018 477h1v4h-1zM1019 480h1v1h-1zM1020 476h1v5h-1z" fill="#ff00ff"/>
<path d="M27 601h1v1h-1zM32 601h1v1h-1zM37 597h1v5h-1zM44 601h1v1h-1zM46 597h1v5h-1zM47 599h1v3h-1zM65 600h1v4h-1zM66 582h1v20h-1zM67 564h1v19h-1zM68 550h1v15h-1zM69 542h1v9h-1zM70 539h1v4h-1zM73 541h1v2h-1zM82 539h1v1h-1zM84 536h1v7h-1zM87 539h1v5h-1zM91 538h1v5h-1zM92 539h1v4h-1zM103 539h1v6h-1zM107 539h1v4h-1zM109 541h1v2h-1zM119 534h1v4h-1zM120 537h1v5h-1zM124 537h1v7h-1zM133 535h1v6h-1zM135 535h1v6h-1zM138 534h1v4h-1zM143 537h1v7h-1zM145 536h1v6h-1zM158 538h1v3h-1zM159 534h1v8h-1zM166 537h1v5h-1zM186 537h1v5h-1zM222 537h1v4h-1zM229 537h1v1h-1zM232 538h1v3h-1zM233 537h1v1h-1zM237 540h1v1h-1zM244 537h1v4h-1zM248 537h1v1h-1zM251 537h1v4h-1zM253 540h1v1h-1zM263 534h1v7h-1zM271 537h1v1h-1zM272 537h1v2h-1zM275 540h1v1h-1zM296 536h1v5h-1zM302 536h1v2h-1zM317 537h1v4h-1zM328 536h1v5h-1zM334 533h1v4h-1zM348 536h1v1h-1zM355 535h1v5h-1zM363 536h1v4h-1zM368 534h1v6h-1zM373 537h1v6h-1zM379 536h1v7h-1zM382 536h1v5h-1zM387 536h1v6h-1zM388 536h1v5h-1zM390 539h1v1h-1zM391 538h1v2h-1zM395 536h1v4h-1zM402 538h1v2h-1zM415 533h1v7h-1zM422 534h1v7h-1zM424 539h1v3h-1zM425 533h1v7h-1zM432 534h1v6h-1zM434 539h1v2h-1zM439 533h1v6h-1zM443 535h1v2h-1zM451 536h1v4h-1zM462 536h1v5h-1zM463 536h1v2h-1zM465 539h1v1h-1zM469 536h1v6h-1zM475 538h1v2h-1zM488 539h1v2h-1zM496 533h1v7h-1zM503 539h1v3h-1zM505 539h1v1h-1zM509 535h1v8h-1zM522 534h1v6h-1zM523 536h1v7h-1zM526 536h1v4h-1zM531 536h1v5h-1zM532 538h1v2h-1zM536 536h1v4h-1zM538 539h1v1h-1zM540 534h1v6h-1zM544 534h1v6h-1zM545 539h1v1h-1zM551 535h1v8h-1zM552 536h1v2h-1zM554 536h1v7h-1zM560 536h1v6h-1zM572 538h1v1h-1zM574 535h1v4h-1zM578 537h1v2h-1zM579 532h1v7h-1zM581 535h1v1h-1zM585 535h1v1h-1zM587 534h1v2h-1zM591 535h1v1h-1zM609 535h1v5h-1zM610 535h1v1h-1zM615 534h1v5h-1zM618 535h1v3h-1zM619 538h1v1h-1zM620 536h1v3h-1zM629 532h1v7h-1zM633 538h1v1h-1zM640 534h1v2h-1zM651 535h1v1h-1zM654 538h1v1h-1zM656 535h1v1h-1zM675 535h1v1h-1zM678 533h1v6h-1zM680 535h1v5h-1zM691 533h1v3h-1zM697 535h1v6h-1zM715 535h1v4h-1zM716 538h1v1h-1zM720 534h1v8h-1zM726 533h1v6h-1zM742 535h1v1h-1zM750 535h1v2h-1zM765 532h1v7h-1zM779 532h1v7h-1zM780 534h1v5h-1zM789 535h1v4h-1zM801 531h1v7h-1zM804 537h1v1h-1zM806 531h1v8h-1zM808 534h1v1h-1zM809 533h1v8h-1zM819 534h1v6h-1zM820 537h1v1h-1zM821 537h1v1h-1zM827 531h1v4h-1zM831 532h1v6h-1zM838 534h1v1h-1zM842 534h1v7h-1zM857 534h1v4h-1zM861 534h1v5h-1zM863 534h1v4h-1zM869 534h1v4h-1zM872 537h1v1h-1zM875 537h1v1h-1zM880 534h1v1h-1zM885 534h1v6h-1zM890 534h1v4h-1zM898 534h1v5h-1zM899 537h1v1h-1zM909 534h1v6h-1zM920 532h1v3h-1zM921 533h1v8h-1zM924 537h1v1h-1zM929 534h1v7h-1zM933 534h1v4h-1zM937 534h1v1h-1zM948 534h1v6h-1zM949 533h1v2h-1zM961 537h1v1h-1zM964 534h1v1h-1zM966 531h1v8h-1zM971 537h1v1h-1zM973 534h1v2h-1zM976 534h1v6h-1zM985 533h1v8h-1zM991 534h1v4h-1zM1000 533h1v5h-1zM1006 534h1v5h-1zM1007 537h1v2h-1zM1009 534h1v4h-1z" fill="#a0a000"/><path d="M21 598h1v4h-1zM22 601h1v2h-1zM23 596h1v6h-1zM24 601h1v2h-1zM25 601h1v1h-1zM26 601h1v1h-1zM28 601h1v2h-1zM29 598h1v4h-1zM30 598h1v1h-1zM31 595h1v6h-1zM33 601h1v1h-1zM34 598h1v4h-1zM35 598h1v4h-1zM36 598h1v4h-1zM38 598h1v4h-1zM39 598h1v3h-1zM40 598h1v7h-1zM41 598h1v6h-1zM42 597h1v5h-1zM43 598h1v4h-1zM45 601h1v1h-1zM48 596h1v3h-1zM49 597h1v6h-1zM50 601h1v1h-1zM51 598h1v4h-1zM52 597h1v2h-1zM53 598h1v5h-1zM54 598h1v4h-1zM55 598h1v5h-1zM56 597h1v5h-1zM57 597h1v2h-1zM58 598h1v5h-1zM59 599h1v5h-1zM60 598h1v4h-1zM61 598h1v5h-1zM62 598h1v1h-1zM63 598h1v6h-1zM64 600h1v4h-1zM71 539h1v4h-1zM72 536h1v7h-1zM74 538h1v6h-1zM75 542h1v1h-1zM76 542h1v1h-1zM77 539h1v4h-1zM78 537h1v7h-1zM79 541h1v2h-1zM80 542h1v1h-1zM81 539h1v4h-1zM83 539h1v4h-1zM85 542h1v1h-1zM86 539h1v4h-1zM88 538h1v2h-1zM89 539h1v1h-1zM90 539h1v1h-1zM93 539h1v7h-1zM94 539h1v4h-1zM95 539h1v4h-1zM96 539h1v4h-1zM97 542h1v1h-1zM98 539h1v4h-1zM99 539h1v2h-1zM100 539h1v4h-1zM101 536h1v7h-1zM102 539h1v6h-1zM104 538h1v2h-1zM105 539h1v5h-1zM106 539h1v1h-1zM108 542h1v3h-1zM110 542h1v1h-1zM111 537h1v6h-1zM112 536h1v7h-1zM113 538h1v2h-1zM114 539h1v4h-1zM115 539h1v4h-1zM116 539h1v1h-1zM117 534h1v4h-1zM118 537h1v5h-1zM121 537h1v4h-1zM122 540h1v1h-1zM123 538h1v3h-1zM125 540h1v1h-1zM126 540h1v2h-1zM127 536h1v6h-1zM128 537h1v6h-1zM129 540h1v1h-1zM130 540h1v2h-1zM131 540h1v2h-1zM132 540h1v1h-1zM134 536h1v3h-1zM136 540h1v1h-1zM137 537h1v5h-1zM139 537h1v1h-1zM140 537h1v1h-1zM141 537h1v1h-1zM142 537h1v7h-1zM144 536h1v5h-1zM146 537h1v4h-1zM147 539h1v2h-1zM148 537h1v4h-1zM149 537h1v1h-1zM150 537h1v1h-1zM151 537h1v1h-1zM152 537h1v2h-1zM153 537h1v2h-1zM154 534h1v4h-1zM155 537h1v6h-1zM156 537h1v5h-1zM157 540h1v2h-1zM160 536h1v5h-1zM161 537h1v1h-1zM162 537h1v7h-1zM163 540h1v1h-1zM164 540h1v1h-1zM165 536h1v5h-1zM167 535h1v7h-1zM168 536h1v5h-1zM169 537h1v1h-1zM170 535h1v6h-1zM171 537h1v4h-1zM172 537h1v2h-1zM173 534h1v7h-1zM174 540h1v1h-1zM175 540h1v1h-1zM176 540h1v1h-1zM177 540h1v1h-1zM178 537h1v7h-1zM179 537h1v2h-1zM180 537h1v5h-1zM181 537h1v4h-1zM182 535h1v6h-1zM183 537h1v5h-1zM184 537h1v5h-1zM185 536h1v2h-1zM187 536h1v7h-1zM188 537h1v6h-1zM189 537h1v7h-1zM190 537h1v4h-1zM191 540h1v1h-1zM192 538h1v3h-1zM193 537h1v1h-1zM194 536h1v2h-1zM195 537h1v6h-1zM196 540h1v2h-1zM197 537h1v4h-1zM198 536h1v2h-1zM199 537h1v6h-1zM200 537h1v3h-1zM201 537h1v4h-1zM202 537h1v1h-1zM203 537h1v1h-1zM204 537h1v5h-1zM205 540h1v1h-1zM206 537h1v4h-1zM207 537h1v1h-1zM208 536h1v2h-1zM209 537h1v1h-1zM210 537h1v5h-1zM211 540h1v4h-1zM212 540h1v1h-1zM213 540h1v2h-1zM214 540h1v1h-1zM215 539h1v2h-1zM216 540h1v2h-1zM217 540h1v3h-1zM218 537h1v5h-1zM219 534h1v4h-1zM220 537h1v1h-1zM221 537h1v1h-1zM223 540h1v1h-1zM224 539h1v4h-1zM225 534h1v7h-1zM226 540h1v2h-1zM227 537h1v6h-1zM228 537h1v1h-1zM230 536h1v2h-1zM231 537h1v4h-1zM234 535h1v6h-1zM235 537h1v4h-1zM236 537h1v7h-1zM238 538h1v3h-1zM239 537h1v6h-1zM240 537h1v4h-1zM241 537h1v7h-1zM242 537h1v1h-1zM243 537h1v6h-1zM245 536h1v5h-1zM246 537h1v4h-1zM247 535h1v4h-1zM249 537h1v1h-1zM250 537h1v5h-1zM252 537h1v4h-1zM254 538h1v3h-1zM255 537h1v7h-1zM256 535h1v6h-1zM257 540h1v1h-1zM258 539h1v2h-1zM259 540h1v2h-1zM260 540h1v4h-1zM261 537h1v4h-1zM262 537h1v1h-1zM264 535h1v6h-1zM265 537h1v4h-1zM266 537h1v6h-1zM267 537h1v5h-1zM268 539h1v4h-1zM269 540h1v1h-1zM270 537h1v5h-1zM273 537h1v4h-1zM274 540h1v4h-1zM276 535h1v6h-1zM277 534h1v7h-1zM278 537h1v5h-1zM279 540h1v2h-1zM280 534h1v7h-1zM281 537h1v4h-1zM282 537h1v1h-1zM283 537h1v1h-1zM284 537h1v1h-1zM285 537h1v1h-1zM286 537h1v4h-1zM287 535h1v6h-1zM288 535h1v3h-1zM289 537h1v2h-1zM290 537h1v1h-1zM291 537h1v4h-1zM292 536h1v5h-1zM293 537h1v6h-1zM294 535h1v6h-1zM295 536h1v5h-1zM297 534h1v7h-1zM298 535h1v6h-1zM299 537h1v5h-1zM300 537h1v4h-1zM301 536h1v2h-1zM303 537h1v3h-1zM304 537h1v4h-1zM305 537h1v7h-1zM306 535h1v3h-1zM307 537h1v1h-1zM308 536h1v5h-1zM309 537h1v5h-1zM310 537h1v1h-1zM311 537h1v6h-1zM312 537h1v5h-1zM313 540h1v1h-1zM314 534h1v7h-1zM315 540h1v1h-1zM316 540h1v2h-1zM318 537h1v7h-1zM319 537h1v4h-1zM320 537h1v3h-1zM321 540h1v1h-1zM322 536h1v5h-1zM323 535h1v7h-1zM324 538h1v3h-1zM325 536h1v5h-1zM326 540h1v2h-1zM327 535h1v6h-1zM329 537h1v4h-1zM330 537h1v1h-1zM331 536h1v3h-1zM332 533h1v7h-1zM333 535h1v2h-1zM335 536h1v4h-1zM336 538h1v2h-1zM337 534h1v6h-1zM338 536h1v7h-1zM339 539h1v4h-1zM340 539h1v1h-1zM341 535h1v5h-1zM342 535h1v2h-1zM343 536h1v4h-1zM344 534h1v6h-1zM345 535h1v5h-1zM346 536h1v1h-1zM347 536h1v1h-1zM349 536h1v4h-1zM350 534h1v6h-1zM351 536h1v1h-1zM352 536h1v6h-1zM353 536h1v4h-1zM354 535h1v5h-1zM356 536h1v3h-1zM357 536h1v4h-1zM358 536h1v1h-1zM359 534h1v6h-1zM360 538h1v2h-1zM361 539h1v2h-1zM362 536h1v4h-1zM364 535h1v5h-1zM365 539h1v3h-1zM366 536h1v4h-1zM367 536h1v4h-1zM369 539h1v4h-1zM370 539h1v1h-1zM371 539h1v1h-1zM372 539h1v1h-1zM374 536h1v5h-1zM375 539h1v2h-1zM376 539h1v1h-1zM377 539h1v1h-1zM378 537h1v5h-1zM380 539h1v1h-1zM381 539h1v1h-1zM383 534h1v6h-1zM384 539h1v1h-1zM385 536h1v4h-1zM386 536h1v1h-1zM389 539h1v1h-1zM392 536h1v6h-1zM393 536h1v4h-1zM394 537h1v3h-1zM396 538h1v5h-1zM397 539h1v1h-1zM398 537h1v3h-1zM399 536h1v4h-1zM400 539h1v1h-1zM401 538h1v2h-1zM403 539h1v1h-1zM404 536h1v4h-1zM405 533h1v4h-1zM406 536h1v1h-1zM407 536h1v1h-1zM408 536h1v7h-1zM409 539h1v1h-1zM410 533h1v7h-1zM411 536h1v4h-1zM412 536h1v5h-1zM413 536h1v4h-1zM414 535h1v4h-1zM416 536h1v1h-1zM417 536h1v5h-1zM418 538h1v2h-1zM419 536h1v4h-1zM420 536h1v6h-1zM421 534h1v6h-1zM423 539h1v1h-1zM426 536h1v1h-1zM427 536h1v1h-1zM428 534h1v3h-1zM429 536h1v4h-1zM430 536h1v4h-1zM431 536h1v5h-1zM433 533h1v7h-1zM435 539h1v1h-1zM436 536h1v4h-1zM437 535h1v6h-1zM438 536h1v4h-1zM440 539h1v1h-1zM441 539h1v1h-1zM442 536h1v4h-1zM444 536h1v4h-1zM445 538h1v2h-1zM446 536h1v5h-1zM447 535h1v2h-1zM448 536h1v4h-1zM449 539h1v2h-1zM450 539h1v1h-1zM452 534h1v6h-1zM453 535h1v6h-1zM454 536h1v4h-1zM455 536h1v1h-1zM456 536h1v4h-1zM457 539h1v4h-1zM458 539h1v1h-1zM459 533h1v7h-1zM460 538h1v2h-1zM461 537h1v5h-1zM464 536h1v4h-1zM466 536h1v7h-1zM467 536h1v1h-1zM468 533h1v4h-1zM470 536h1v5h-1zM471 536h1v1h-1zM472 535h1v2h-1zM473 536h1v1h-1zM474 536h1v4h-1zM476 539h1v1h-1zM477 536h1v4h-1zM478 536h1v4h-1zM479 539h1v1h-1zM480 539h1v4h-1zM481 536h1v4h-1zM482 536h1v5h-1zM483 535h1v5h-1zM484 536h1v4h-1zM485 535h1v5h-1zM486 534h1v3h-1zM487 536h1v3h-1zM489 536h1v4h-1zM490 536h1v1h-1zM491 535h1v2h-1zM492 536h1v1h-1zM493 536h1v4h-1zM494 539h1v1h-1zM495 539h1v1h-1zM497 534h1v6h-1zM498 536h1v7h-1zM499 539h1v2h-1zM500 539h1v2h-1zM501 539h1v1h-1zM502 539h1v1h-1zM504 539h1v1h-1zM506 536h1v6h-1zM507 536h1v4h-1zM508 536h1v5h-1zM510 536h1v1h-1zM511 536h1v5h-1zM512 535h1v5h-1zM513 533h1v7h-1zM514 536h1v4h-1zM515 536h1v1h-1zM516 536h1v6h-1zM517 536h1v4h-1zM518 536h1v1h-1zM519 536h1v1h-1zM520 536h1v2h-1zM521 536h1v5h-1zM524 535h1v5h-1zM525 536h1v4h-1zM527 539h1v2h-1zM528 539h1v1h-1zM529 539h1v1h-1zM530 537h1v3h-1zM533 536h1v4h-1zM534 536h1v1h-1zM535 536h1v1h-1zM537 535h1v5h-1zM539 538h1v2h-1zM541 536h1v5h-1zM542 535h1v4h-1zM543 536h1v4h-1zM546 535h1v5h-1zM547 536h1v1h-1zM548 535h1v2h-1zM549 535h1v2h-1zM550 536h1v1h-1zM553 536h1v1h-1zM555 535h1v2h-1zM556 536h1v1h-1zM557 535h1v2h-1zM558 536h1v1h-1zM559 536h1v1h-1zM561 534h1v3h-1zM562 534h1v2h-1zM563 535h1v3h-1zM564 538h1v1h-1zM565 535h1v4h-1zM566 533h1v4h-1zM567 533h1v6h-1zM568 538h1v1h-1zM569 538h1v1h-1zM570 538h1v1h-1zM571 533h1v6h-1zM573 535h1v4h-1zM575 538h1v4h-1zM576 538h1v4h-1zM577 538h1v1h-1zM580 535h1v6h-1zM582 534h1v5h-1zM583 537h1v2h-1zM584 536h1v3h-1zM586 535h1v6h-1zM588 535h1v5h-1zM589 535h1v2h-1zM590 535h1v2h-1zM592 535h1v6h-1zM593 534h1v5h-1zM594 535h1v7h-1zM595 535h1v4h-1zM596 538h1v1h-1zM597 538h1v3h-1zM598 533h1v6h-1zM599 535h1v4h-1zM600 534h1v5h-1zM601 532h1v4h-1zM602 535h1v4h-1zM603 538h1v1h-1zM604 532h1v7h-1zM605 535h1v4h-1zM606 535h1v4h-1zM607 533h1v7h-1zM608 535h1v4h-1zM611 534h1v5h-1zM612 536h1v5h-1zM613 535h1v4h-1zM614 538h1v1h-1zM616 535h1v7h-1zM617 535h1v5h-1zM621 532h1v7h-1zM622 538h1v1h-1zM623 533h1v6h-1zM624 533h1v6h-1zM625 535h1v4h-1zM626 538h1v1h-1zM627 535h1v5h-1zM628 535h1v4h-1zM630 535h1v1h-1zM631 533h1v3h-1zM632 535h1v5h-1zM634 534h1v5h-1zM635 533h1v3h-1zM636 535h1v4h-1zM637 535h1v4h-1zM638 535h1v1h-1zM639 535h1v1h-1zM641 535h1v6h-1zM642 535h1v1h-1zM643 534h1v2h-1zM644 535h1v4h-1zM645 535h1v4h-1zM646 534h1v5h-1zM647 535h1v6h-1zM648 535h1v1h-1zM649 535h1v5h-1zM650 535h1v6h-1zM652 535h1v1h-1zM653 535h1v7h-1zM655 535h1v4h-1zM657 535h1v4h-1zM658 538h1v1h-1zM659 538h1v2h-1zM660 538h1v2h-1zM661 536h1v3h-1zM662 535h1v5h-1zM663 538h1v1h-1zM664 535h1v4h-1zM665 534h1v5h-1zM666 536h1v3h-1zM667 535h1v1h-1zM668 534h1v2h-1zM669 534h1v2h-1zM670 535h1v4h-1zM671 538h1v1h-1zM672 536h1v3h-1zM673 535h1v1h-1zM674 535h1v1h-1zM676 535h1v1h-1zM677 535h1v5h-1zM679 535h1v4h-1zM681 534h1v6h-1zM682 535h1v4h-1zM683 535h1v1h-1zM684 533h1v3h-1zM685 535h1v1h-1zM686 535h1v1h-1zM687 535h1v5h-1zM688 535h1v4h-1zM689 535h1v1h-1zM690 535h1v1h-1zM692 533h1v6h-1zM693 538h1v1h-1zM694 532h1v7h-1zM695 532h1v7h-1zM696 534h1v4h-1zM698 535h1v7h-1zM699 532h1v4h-1zM700 535h1v4h-1zM701 538h1v1h-1zM702 535h1v4h-1zM703 535h1v4h-1zM704 533h1v6h-1zM705 533h1v6h-1zM706 535h1v4h-1zM707 538h1v1h-1zM708 538h1v4h-1zM709 538h1v1h-1zM710 538h1v3h-1zM711 538h1v2h-1zM712 538h1v1h-1zM713 533h1v6h-1zM714 534h1v2h-1zM717 532h1v7h-1zM718 535h1v6h-1zM719 535h1v6h-1zM721 535h1v7h-1zM722 538h1v1h-1zM723 535h1v5h-1zM724 535h1v4h-1zM725 533h1v7h-1zM727 536h1v4h-1zM728 535h1v4h-1zM729 536h1v3h-1zM730 535h1v2h-1zM731 535h1v4h-1zM732 535h1v4h-1zM733 532h1v4h-1zM734 532h1v6h-1zM735 538h1v4h-1zM736 537h1v2h-1zM737 538h1v1h-1zM738 538h1v1h-1zM739 538h1v1h-1zM740 536h1v3h-1zM741 535h1v1h-1zM743 535h1v4h-1zM744 538h1v1h-1zM745 537h1v2h-1zM746 538h1v1h-1zM747 534h1v5h-1zM748 538h1v1h-1zM749 535h1v4h-1zM751 535h1v6h-1zM752 538h1v1h-1zM753 536h1v5h-1zM754 535h1v6h-1zM755 535h1v5h-1zM756 534h1v5h-1zM757 538h1v1h-1zM758 535h1v4h-1zM759 535h1v3h-1zM760 535h1v4h-1zM761 534h1v2h-1zM762 535h1v6h-1zM763 535h1v7h-1zM764 537h1v4h-1zM766 535h1v4h-1zM767 538h1v4h-1zM768 535h1v4h-1zM769 535h1v5h-1zM770 535h1v4h-1zM771 535h1v4h-1zM772 534h1v7h-1zM773 535h1v1h-1zM774 535h1v1h-1zM775 533h1v6h-1zM776 535h1v4h-1zM777 535h1v1h-1zM778 535h1v4h-1zM781 533h1v6h-1zM782 534h1v5h-1zM783 535h1v4h-1zM784 535h1v5h-1zM785 533h1v6h-1zM786 535h1v1h-1zM787 535h1v1h-1zM788 535h1v4h-1zM790 535h1v1h-1zM791 535h1v2h-1zM792 535h1v7h-1zM793 535h1v3h-1zM794 538h1v1h-1zM795 533h1v7h-1zM796 538h1v1h-1zM797 538h1v1h-1zM798 538h1v1h-1zM799 532h1v7h-1zM800 536h1v3h-1zM802 537h1v2h-1zM803 537h1v1h-1zM805 533h1v5h-1zM807 533h1v5h-1zM810 534h1v1h-1zM811 533h1v2h-1zM812 531h1v7h-1zM813 534h1v4h-1zM814 534h1v4h-1zM815 534h1v4h-1zM816 534h1v7h-1zM817 537h1v3h-1zM818 533h1v6h-1zM822 535h1v5h-1zM823 534h1v4h-1zM824 533h1v5h-1zM825 534h1v1h-1zM826 533h1v2h-1zM828 534h1v3h-1zM829 531h1v7h-1zM830 534h1v4h-1zM832 533h1v2h-1zM833 534h1v4h-1zM834 534h1v5h-1zM835 534h1v3h-1zM836 537h1v1h-1zM837 534h1v4h-1zM839 534h1v1h-1zM840 534h1v7h-1zM841 533h1v2h-1zM843 534h1v4h-1zM844 532h1v6h-1zM845 535h1v3h-1zM846 532h1v7h-1zM847 537h1v2h-1zM848 537h1v2h-1zM849 534h1v4h-1zM850 534h1v3h-1zM851 531h1v7h-1zM852 534h1v4h-1zM853 537h1v3h-1zM854 537h1v4h-1zM855 534h1v4h-1zM856 534h1v1h-1zM858 537h1v1h-1zM859 534h1v4h-1zM860 534h1v1h-1zM862 532h1v6h-1zM864 534h1v5h-1zM865 532h1v4h-1zM866 534h1v4h-1zM867 537h1v1h-1zM868 531h1v7h-1zM870 537h1v1h-1zM871 532h1v6h-1zM873 534h1v5h-1zM874 534h1v6h-1zM876 534h1v4h-1zM877 531h1v7h-1zM878 537h1v1h-1zM879 533h1v5h-1zM881 532h1v6h-1zM882 537h1v1h-1zM883 533h1v5h-1zM884 532h1v6h-1zM886 534h1v3h-1zM887 534h1v4h-1zM888 534h1v1h-1zM889 534h1v5h-1zM891 532h1v6h-1zM892 534h1v4h-1zM893 534h1v1h-1zM894 534h1v1h-1zM895 534h1v1h-1zM896 531h1v7h-1zM897 534h1v7h-1zM900 534h1v4h-1zM901 534h1v6h-1zM902 531h1v7h-1zM903 531h1v7h-1zM904 531h1v7h-1zM905 537h1v2h-1zM906 534h1v4h-1zM907 534h1v1h-1zM908 534h1v3h-1zM910 534h1v1h-1zM911 534h1v1h-1zM912 534h1v1h-1zM913 533h1v2h-1zM914 534h1v1h-1zM915 534h1v1h-1zM916 534h1v4h-1zM917 534h1v4h-1zM918 534h1v4h-1zM919 533h1v5h-1zM922 533h1v2h-1zM923 534h1v3h-1zM925 533h1v5h-1zM926 534h1v7h-1zM927 534h1v1h-1zM928 534h1v1h-1zM930 534h1v7h-1zM931 533h1v6h-1zM932 537h1v1h-1zM934 534h1v3h-1zM935 535h1v4h-1zM936 531h1v4h-1zM938 534h1v6h-1zM939 537h1v1h-1zM940 537h1v1h-1zM941 534h1v7h-1zM942 534h1v4h-1zM943 534h1v7h-1zM944 533h1v5h-1zM945 532h1v6h-1zM946 537h1v2h-1zM947 535h1v3h-1zM950 534h1v7h-1zM951 534h1v4h-1zM952 534h1v4h-1zM953 533h1v7h-1zM954 532h1v6h-1zM955 537h1v2h-1zM956 534h1v6h-1zM957 534h1v4h-1zM958 532h1v6h-1zM959 534h1v4h-1zM960 537h1v1h-1zM962 533h1v5h-1zM963 534h1v4h-1zM965 534h1v6h-1zM967 537h1v1h-1zM968 534h1v4h-1zM969 531h1v7h-1zM970 537h1v4h-1zM972 534h1v4h-1zM974 534h1v5h-1zM975 532h1v3h-1zM977 537h1v1h-1zM978 537h1v4h-1zM979 532h1v6h-1zM980 537h1v1h-1zM981 534h1v4h-1zM982 534h1v3h-1zM983 537h1v4h-1zM984 537h1v1h-1zM986 534h1v1h-1zM987 534h1v1h-1zM988 534h1v1h-1zM989 534h1v1h-1zM990 534h1v1h-1zM992 531h1v7h-1zM993 533h1v5h-1zM994 536h1v2h-1zM995 533h1v6h-1zM996 533h1v5h-1zM997 534h1v1h-1zM998 532h1v3h-1zM999 531h1v7h-1zM1001 532h1v3h-1zM1002 534h1v1h-1zM1003 532h1v6h-1zM1004 534h1v4h-1zM1005 534h1v1h-1zM1008 533h1v5h-1zM1010 534h1v4h-1zM1011 534h1v4h-1zM1012 532h1v6h-1zM1013 532h1v5h-1zM1014 531h1v7h-1zM1015 534h1v4h-1zM1016 537h1v3h-1zM1017 533h1v5h-1zM1018 534h1v1h-1zM1019 531h1v5h-1zM1020 531h1v4h-1z" fill="#ffff00"/>
</svg>
<div class="rb" style="left:20px;top:670px;width:555px;height:21px;"></div>
<div class="rb" style="left:582px;top:670px;width:148px;height:38px;"></div>
<div class="rb" style="left:737px;top:670px;width:107px;height:38px;"></div>
<div class="rb" style="left:851px;top:670px;width:171px;height:38px;"></div>
<div class="rb" style="left:909px;top:729px;width:113px;height:37px;"></div>

<div class="btn" style="left:20px;"></div>
<div class="btn" style="left:138px;"></div>
<div class="btn" style="left:256px;"></div>
<div class="btn" style="left:374px;"></div>
<div class="btn" style="left:492px;"></div>
<div class="btn" style="left:728px;"></div>
<div class="a" style="left:58px;top:742px;width:39px;height:16px;background:#c8cde6"></div>
<div class="a" style="left:278px;top:742px;width:71px;height:16px;background:#c8cde6"></div>
<div class="a" style="left:523px;top:742px;width:53px;height:16px;background:#c8cde6"></div>
<div class="a" style="left:756px;top:733px;width:58px;height:16px;background:#c8cde6"></div>
<div class="pill" style="left:26px;top:673px;width:25px;height:16px;background:#ffff00;"></div>
<div class="pill" style="left:304px;top:673px;width:25px;height:16px;background:#a000a0;">3</div>
<div class="pill" style="left:443px;top:673px;width:25px;height:16px;background:#00a000;">4</div>
<div class="pill" style="left:882px;top:673px;width:25px;height:16px;background:#ffff00;"></div>
<div class="pill" style="left:183px;top:742px;width:25px;height:16px;background:#ffff00;"></div>
<svg class="a" style="left:0;top:0" width="1024" height="768">
<!-- ch4 marker -->
<polygon points="0,82 13,82 20.5,89.5 13,97.5 0,97.5" fill="#00a400"/>
<polyline points="0,82.5 13,82.5" stroke="#c8c8b0" stroke-width="1"/>
<polyline points="0,97 13,97 20,90" stroke="#101010" stroke-width="1.2" fill="none"/>
<!-- ch3 marker -->
<polygon points="1,469.8 12.8,469.8 19.8,477.8 12.8,485.2 1,485.2" fill="#000" stroke="#c000c0" stroke-width="1.6"/>
<!-- ch1 marker -->
<polygon points="1,594.8 12.8,594.8 19.8,602.5 12.8,610.2 1,610.2" fill="#000" stroke="#ffff00" stroke-width="1.6"/>
<!-- trigger level arrow -->
<polygon points="1010,567.5 1016,561.5 1016,573.5" fill="#ffff00"/>
<rect x="1016" y="567" width="5" height="1" fill="#ffff00"/>
<!-- T shield -->
<path d="M64,24 H74 Q75,24 75,25 V35 L69,39 L63,35 V25 Q63,24 64,24 Z" fill="#ff9900"/>
<rect x="64" y="25" width="10" height="2" fill="#000"/>
<rect x="68" y="27" width="2" height="9" fill="#000"/>
<!-- trigger position marker top -->
<path d="M517,1 H525 L521,5 Z" fill="#ff9900"/>
<rect x="516" y="5" width="9" height="11" rx="1.5" fill="#ff9900"/>
<rect x="519" y="7" width="3" height="8" fill="#000"/>
<rect x="520" y="1" width="1" height="14" fill="#9a9a9a"/>
<path d="M515.5,17 H527 L521.2,23.5 Z" fill="#ff9900"/>
<!-- timebase T box -->
<rect x="587" y="691" width="12" height="13" rx="2" fill="#ff9900"/>
<rect x="589.5" y="692" width="8" height="2" fill="#000"/>
<rect x="592.5" y="694" width="2" height="9" fill="#000"/>
<rect x="600" y="697" width="8" height="1.2" fill="#ff9900"/>
<path d="M604.5,693.5 L609,697.6 L604.5,701.5" stroke="#ff9900" stroke-width="1.4" fill="none"/>
<path d="M610,694 H621 L615.5,700.5 Z" fill="#ff9900"/>
<!-- trigger readout edge icon -->
<path d="M920,685 H925 L928,677 H932" stroke="#fff" stroke-width="2" fill="none"/>
<!-- BW label -->
<path d="M422 675h3v1h-3zM422 676h1v6h-1zM425 676h1v2h-1zM422 678h3v1h-3zM425 679h1v2h-1zM422 681h3v1h-3zM426 679h1v6h-1zM430 679h1v6h-1zM428 681h1v4h-1zM427 685h1v1h-1zM429 685h1v1h-1z" fill="#c000c0"/>
<!-- ones -->
<path d="M38 675h2v11h-2zM36 676h2v1h-2z" fill="#000"/>
<path d="M894 675h2v11h-2zM892 676h2v1h-2z" fill="#000"/>
<path d="M195 744h2v11h-2zM193 745h2v1h-2z" fill="#000"/>
<path d="M7 597h2v11h-2zM5 598h2v1h-2z" fill="#ffff00"/>
<!-- slope box -->
<path d="M382,735 H422 Q426,735 426,739 V768 H378 V739 Q378,735 382,735 Z" fill="#c8cde6"/>
<path d="M382,762.3 H397 L406.8,741.3 H422" stroke="#000" stroke-width="1.3" fill="none"/>
<path d="M404,747 L397,754.5 L404.5,755 Z" fill="#000"/>
<path d="M439,741.3 H453.9 L464.3,762.3 H479" stroke="#000" stroke-width="1.3" fill="none"/>
<path d="M461.5,756 L454,749 L461,749 Z" fill="#000"/>
</svg>

<div class="t" style="left:35px;top:0px;font-size:16px;font-weight:normal;letter-spacing:0.5px;color:#fff;-webkit-text-stroke:0.3px currentColor;transform:scaleY(0.92);transform-origin:0 0">Run</div>
<div class="t" style="left:925px;top:1px;font-size:16px;font-weight:normal;letter-spacing:1.0px;color:#fff;-webkit-text-stroke:0.3px currentColor;transform:scaleY(0.92);transform-origin:0 0">Trig?</div>
<div class="t" style="left:68px;top:673px;font-size:16px;font-weight:normal;letter-spacing:0.8px;color:#ffff00;-webkit-text-stroke:0.3px currentColor;transform:scaleY(0.92);transform-origin:0 0">5.00 V</div>
<div class="t" style="left:346px;top:673px;font-size:16px;font-weight:normal;letter-spacing:1.0px;color:#c000c0;-webkit-text-stroke:0.3px currentColor;transform:scaleY(0.92);transform-origin:0 0">200mV</div>
<div class="t" style="left:485px;top:673px;font-size:16px;font-weight:normal;letter-spacing:1.33px;color:#00b000;-webkit-text-stroke:0.3px currentColor;transform:scaleY(0.92);transform-origin:0 0">50.0mVΩ</div>
<div class="t" style="left:588px;top:673px;font-size:16px;font-weight:normal;letter-spacing:1.25px;color:#fff;-webkit-text-stroke:0.3px currentColor;transform:scaleY(0.92);transform-origin:0 0">100ns</div>
<div class="t" style="left:623px;top:691px;font-size:16px;font-weight:normal;letter-spacing:1.0px;color:#ff9900;-webkit-text-stroke:0.3px currentColor;transform:scaleY(0.92);transform-origin:0 0">452.000ns</div>
<div class="t" style="left:743px;top:674px;font-size:16px;font-weight:normal;letter-spacing:0.86px;color:#fff;-webkit-text-stroke:0.3px currentColor;transform:scaleY(0.92);transform-origin:0 0">2.50GS/s</div>
<div class="t" style="left:743px;top:691px;font-size:16px;font-weight:normal;letter-spacing:1.5px;color:#fff;-webkit-text-stroke:0.3px currentColor;transform:scaleY(0.92);transform-origin:0 0">1M points</div>
<div class="t" style="left:965px;top:674px;font-size:16px;font-weight:normal;letter-spacing:0.8px;color:#fff;-webkit-text-stroke:0.3px currentColor;transform:scaleY(0.92);transform-origin:0 0">2.70 V</div>
<div class="t" style="left:916px;top:733px;font-size:16px;font-weight:normal;letter-spacing:1.1px;color:#fff;-webkit-text-stroke:0.3px currentColor;transform:scaleY(0.92);transform-origin:0 0">18 Aug 2021</div>
<div class="t" style="left:916px;top:749px;font-size:16px;font-weight:normal;letter-spacing:1.0px;color:#fff;-webkit-text-stroke:0.3px currentColor;transform:scaleY(0.92);transform-origin:0 0">10:44:47</div>
<div class="t" style="left:57px;top:725px;font-size:16px;font-weight:normal;letter-spacing:2.0px;color:#000;-webkit-text-stroke:0.3px currentColor;transform:scaleY(0.92);transform-origin:0 0">Type</div>
<div class="t" style="left:59px;top:743px;font-size:16px;font-weight:normal;letter-spacing:-0.33px;color:#000;-webkit-text-stroke:0.3px currentColor;transform:scaleY(0.92);transform-origin:0 0">Edge</div>
<div class="t" style="left:168px;top:725px;font-size:16px;font-weight:normal;letter-spacing:0.8px;color:#000;-webkit-text-stroke:0.3px currentColor;transform:scaleY(0.92);transform-origin:0 0">Source</div>
<div class="t" style="left:277px;top:726px;font-size:16px;font-weight:normal;letter-spacing:1.57px;color:#000;-webkit-text-stroke:0.3px currentColor;transform:scaleY(0.92);transform-origin:0 0">Coupling</div>
<div class="t" style="left:278px;top:743px;font-size:16px;font-weight:normal;letter-spacing:0.12px;color:#000;-webkit-text-stroke:0.3px currentColor;transform:scaleY(0.92);transform-origin:0 0">LF Reject</div>
<div class="t" style="left:409px;top:718px;font-size:16px;font-weight:normal;letter-spacing:0.75px;color:#000;-webkit-text-stroke:0.3px currentColor;transform:scaleY(0.92);transform-origin:0 0">Slope</div>
<div class="t" style="left:530px;top:726px;font-size:16px;font-weight:normal;letter-spacing:0.5px;color:#000;-webkit-text-stroke:0.3px currentColor;transform:scaleY(0.92);transform-origin:0 0">Level</div>
<div class="t" style="left:524px;top:742px;font-size:16px;font-weight:normal;letter-spacing:0.8px;color:#000;-webkit-text-stroke:0.3px currentColor;transform:scaleY(0.92);transform-origin:0 0">2.70 V</div>
<div class="t" style="left:763px;top:717px;font-size:16px;font-weight:normal;letter-spacing:1.33px;color:#000;-webkit-text-stroke:0.3px currentColor;transform:scaleY(0.92);transform-origin:0 0">Mode</div>
<div class="t" style="left:757px;top:734px;font-size:16px;font-weight:normal;letter-spacing:1.0px;color:#000;-webkit-text-stroke:0.3px currentColor;transform:scaleY(0.92);transform-origin:0 0">Normal</div>
<div class="t" style="left:748px;top:751px;font-size:16px;font-weight:normal;letter-spacing:1.38px;color:#000;-webkit-text-stroke:0.3px currentColor;transform:scaleY(0.92);transform-origin:0 0">&amp; Holdoff</div>
<div class="t" style="left:4px;top:81px;font-size:15px;font-weight:bold;letter-spacing:0px;color:#000;-webkit-text-stroke:0.3px currentColor;">4</div>
<div class="t" style="left:4px;top:469px;font-size:15px;font-weight:bold;letter-spacing:0px;color:#c000c0;-webkit-text-stroke:0.3px currentColor;">3</div>
</body></html>
